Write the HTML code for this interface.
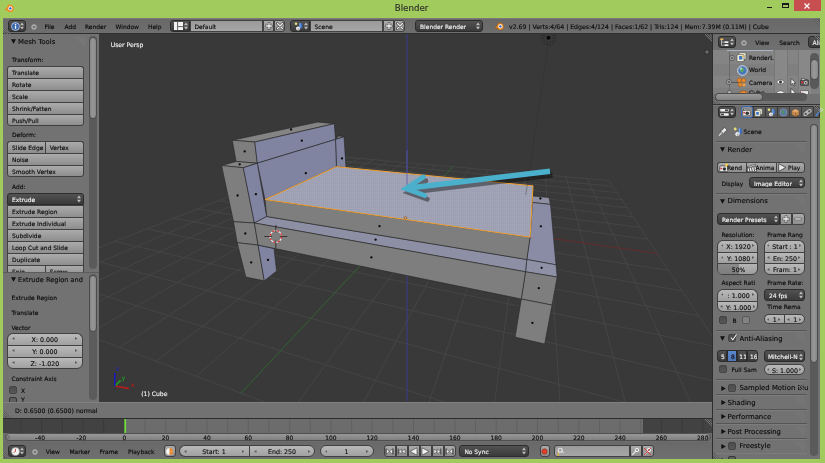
<!DOCTYPE html>
<html><head><meta charset="utf-8"><title>Blender</title><style>
html,body{margin:0;padding:0}
body{width:825px;height:463px;background:#a1cc5d;position:relative;overflow:hidden;font-family:"DejaVu Sans","Liberation Sans",sans-serif;}
#r div,#r svg,#r span.t{position:absolute}
#r{position:absolute;left:0;top:0;width:825px;height:463px;overflow:hidden;filter:blur(0.4px)}
.t{white-space:nowrap;font-family:"DejaVu Sans","Liberation Sans",sans-serif;-webkit-text-stroke:0.13px currentColor}
.b{background:linear-gradient(#ababab,#8e8e8e);border:0.5px solid #414141;box-sizing:border-box;overflow:hidden}
.d{background:linear-gradient(#525252,#3a3a3a);border:0.5px solid #2c2c2c;box-sizing:border-box;overflow:hidden}
.f{background:linear-gradient(#9a9a9a,#a6a6a6);border:0.5px solid #414141;box-sizing:border-box;overflow:hidden}
.n{background:linear-gradient(#b9b9b9,#a0a0a0);border:0.5px solid #414141;box-sizing:border-box;overflow:hidden}
</style></head><body><div id="r">
<div style="left:3px;top:18px;width:817.4px;height:440.5px;background:#727272"></div>
<svg style="left:3.5px;top:2.5px" width="11" height="10" viewBox="3.5 2.5 11 10"><path d="M4.3 8.9L8.6 5.6L7.4 4.4L8.2 3.6L11.5 6.2L9 9.6L5 9.8Z" fill="#ee8a22"/><circle cx="9.8" cy="8" r="3.5" fill="#ee8a22"/><circle cx="9.9" cy="7.9" r="2.1" fill="#fff"/><circle cx="9.9" cy="7.9" r="1.2" fill="#2a5cc0"/></svg>
<div class="t" style="left:0px;top:2.4px;height:12px;line-height:12px;font-size:8.7px;color:#2a2a2a;width:823px;text-align:center;font-family:"Liberation Sans",sans-serif;">Blender</div>
<div style="left:766.5px;top:7px;width:5px;height:1.3px;background:#1a1a1a"></div>
<div style="left:782px;top:3px;width:6.5px;height:5px;border:1px solid #1a1a1a;border-top:2px solid #1a1a1a;box-sizing:border-box"></div>
<div style="left:793.6px;top:0px;width:27px;height:11.4px;background:#c74f50"></div>
<svg style="left:803.5px;top:3px" width="6" height="6" viewBox="0 0 6 6"><path d="M0.5 0.5L5.5 5.5M5.5 0.5L0.5 5.5" stroke="#fff" stroke-width="1.2"/></svg>
<div style="left:3px;top:18px;width:817.4px;height:15.5px;background:linear-gradient(#686868,#6f6f6f);border-top:0.6px solid #7a7a7a;box-sizing:border-box"></div>
<div style="left:3px;top:33px;width:817.4px;height:1px;background:#303030"></div>
<div class="d" style="left:8px;top:20px;width:17.5px;height:11.5px;border-radius:3px;"><span class="t" style="left:3.7px;top:0px;height:11.5px;line-height:11.5px;font-size:5.95px;color:#0a0a0a"></span></div>
<svg style="left:10.5px;top:21.5px" width="9" height="9" viewBox="0 0 9 9"><circle cx="4.5" cy="4.5" r="4" fill="#3a66b0" stroke="#c8d4e8" stroke-width="0.8"/><rect x="3.9" y="3.6" width="1.3" height="3.2" fill="#fff"/><rect x="3.9" y="1.8" width="1.3" height="1.2" fill="#fff"/></svg>
<svg style="left:20.2px;top:21.8px" width="4" height="8" viewBox="0 0 4 8"><path d="M0 3.2L2 0.6L4 3.2Z M0 4.8L2 7.4L4 4.8Z" fill="#bdbdbd"/></svg>
<svg style="left:30.5px;top:23.5px" width="6" height="6" viewBox="0 0 6 6"><circle cx="3" cy="3" r="2.3" fill="#9a9a9a" stroke="#c8c8c8" stroke-width="0.7"/><rect x="1.8" y="2.7" width="2.4" height="0.7" fill="#333"/></svg>
<div class="t" style="left:44.5px;top:22.099999999999998px;height:10px;line-height:10px;font-size:5.95px;color:#0a0a0a;">File</div>
<div class="t" style="left:64.5px;top:22.099999999999998px;height:10px;line-height:10px;font-size:5.95px;color:#0a0a0a;">Add</div>
<div class="t" style="left:85px;top:22.099999999999998px;height:10px;line-height:10px;font-size:5.95px;color:#0a0a0a;">Render</div>
<div class="t" style="left:115.5px;top:22.099999999999998px;height:10px;line-height:10px;font-size:5.95px;color:#0a0a0a;">Window</div>
<div class="t" style="left:148px;top:22.099999999999998px;height:10px;line-height:10px;font-size:5.95px;color:#0a0a0a;">Help</div>
<div class="d" style="left:170px;top:20px;width:20px;height:11.5px;border-radius:3px 0 0 3px;"><span class="t" style="left:3.7px;top:0px;height:11.5px;line-height:11.5px;font-size:5.95px;color:#0a0a0a"></span></div>
<svg style="left:173.5px;top:21.8px" width="9" height="8" viewBox="0 0 9 8"><rect x="0" y="0" width="9" height="8" fill="#f2f2f2"/><path d="M3.6 0V8M3.6 4.6H9" stroke="#555" stroke-width="0.9"/></svg>
<svg style="left:184.3px;top:21.8px" width="4" height="8" viewBox="0 0 4 8"><path d="M0 3.2L2 0.6L4 3.2Z M0 4.8L2 7.4L4 4.8Z" fill="#bdbdbd"/></svg>
<div class="f" style="left:190px;top:20px;width:73px;height:11.5px;border-radius:0;"><span class="t" style="left:3.5px;top:0.3px;height:11.5px;line-height:11.5px;font-size:5.95px;color:#0a0a0a">Default</span></div>
<div class="b" style="left:263px;top:20px;width:11px;height:11.5px;border-radius:0;"><span class="t" style="left:3.7px;top:0px;height:11.5px;line-height:11.5px;font-size:5.95px;color:#0a0a0a"></span></div>
<svg style="left:264.5px;top:21.7px" width="8" height="8" viewBox="0 0 8 8"><path d="M4 0.6V7.4M0.6 4H7.4" stroke="#3a3a3a" stroke-width="2.4"/><path d="M4 1.1V6.9M1.1 4H6.9" stroke="#f4f4f4" stroke-width="1.3"/></svg>
<div class="b" style="left:274px;top:20px;width:11px;height:11.5px;border-radius:0 3px 3px 0;"><span class="t" style="left:3.7px;top:0px;height:11.5px;line-height:11.5px;font-size:5.95px;color:#0a0a0a"></span></div>
<svg style="left:275.5px;top:21.7px" width="8" height="8" viewBox="0 0 8 8"><path d="M1.3 1.3L6.7 6.7M6.7 1.3L1.3 6.7" stroke="#4a4a4a" stroke-width="2.5" stroke-linecap="round"/><path d="M1.5 1.5L6.5 6.5M6.5 1.5L1.5 6.5" stroke="#ececec" stroke-width="1.3" stroke-linecap="round"/></svg>
<div class="d" style="left:290px;top:20px;width:20px;height:11.5px;border-radius:3px 0 0 3px;"><span class="t" style="left:3.7px;top:0px;height:11.5px;line-height:11.5px;font-size:5.95px;color:#0a0a0a"></span></div>
<svg style="left:293.5px;top:21.5px" width="10" height="9" viewBox="0 0 10 9"><circle cx="2" cy="1.8" r="1.3" fill="#e6e07a"/><rect x="5.4" y="1" width="2.8" height="5.4" rx="1.2" fill="#3a6ec0"/><rect x="5.4" y="1" width="1.2" height="5.4" rx="0.6" fill="#7aa6e6"/><circle cx="4" cy="6.6" r="2" fill="#f2f2f2"/><circle cx="4.4" cy="7.1" r="1.2" fill="#b8b8b8"/></svg>
<svg style="left:304.3px;top:21.8px" width="4" height="8" viewBox="0 0 4 8"><path d="M0 3.2L2 0.6L4 3.2Z M0 4.8L2 7.4L4 4.8Z" fill="#bdbdbd"/></svg>
<div class="f" style="left:310px;top:20px;width:73px;height:11.5px;border-radius:0;"><span class="t" style="left:3.5px;top:0.3px;height:11.5px;line-height:11.5px;font-size:5.95px;color:#0a0a0a">Scene</span></div>
<div class="b" style="left:383px;top:20px;width:11px;height:11.5px;border-radius:0;"><span class="t" style="left:3.7px;top:0px;height:11.5px;line-height:11.5px;font-size:5.95px;color:#0a0a0a"></span></div>
<svg style="left:384.5px;top:21.7px" width="8" height="8" viewBox="0 0 8 8"><path d="M4 0.6V7.4M0.6 4H7.4" stroke="#3a3a3a" stroke-width="2.4"/><path d="M4 1.1V6.9M1.1 4H6.9" stroke="#f4f4f4" stroke-width="1.3"/></svg>
<div class="b" style="left:394px;top:20px;width:11px;height:11.5px;border-radius:0 3px 3px 0;"><span class="t" style="left:3.7px;top:0px;height:11.5px;line-height:11.5px;font-size:5.95px;color:#0a0a0a"></span></div>
<svg style="left:395.5px;top:21.7px" width="8" height="8" viewBox="0 0 8 8"><path d="M1.3 1.3L6.7 6.7M6.7 1.3L1.3 6.7" stroke="#4a4a4a" stroke-width="2.5" stroke-linecap="round"/><path d="M1.5 1.5L6.5 6.5M6.5 1.5L1.5 6.5" stroke="#ececec" stroke-width="1.3" stroke-linecap="round"/></svg>
<div class="d" style="left:415px;top:20px;width:68px;height:11.5px;border-radius:3px;"><span class="t" style="left:4px;top:0.3px;height:11.5px;line-height:11.5px;font-size:5.95px;color:#f0f0f0">Blender Render</span></div>
<svg style="left:476.3px;top:21.8px" width="4" height="8" viewBox="0 0 4 8"><path d="M0 3.2L2 0.6L4 3.2Z M0 4.8L2 7.4L4 4.8Z" fill="#bdbdbd"/></svg>
<svg style="left:494px;top:20.8px" width="11" height="10" viewBox="3.5 2.5 11 10"><path d="M4.3 8.9L8.6 5.6L7.4 4.4L8.2 3.6L11.5 6.2L9 9.6L5 9.8Z" fill="#ee8a22" stroke="#5a3a10" stroke-width="0.3"/><circle cx="9.8" cy="8" r="3.5" fill="#ee8a22" stroke="#5a3a10" stroke-width="0.3"/><circle cx="9.9" cy="7.9" r="2.1" fill="#fff"/><circle cx="9.9" cy="7.9" r="1.2" fill="#2a5cc0"/></svg>
<div class="t" style="left:509px;top:22.099999999999998px;height:10px;line-height:10px;font-size:6.2px;color:#0a0a0a;">v2.69 | Verts:4/64 | Edges:4/124 | Faces:1/62 | Tris:124 | Mem:7.39M (0.11M) | Cube</div>
<div style="left:3px;top:34px;width:96px;height:367.5px;background:#727272"></div>
<div style="left:88.5px;top:36px;width:8px;height:233px;background:#5a5a5a;border-radius:4px"></div>
<div style="left:88.5px;top:37px;width:8px;height:82px;background:linear-gradient(90deg,#858585,#979797 45%,#888888);border-radius:4px;border:0.5px solid #4c4c4c;box-sizing:border-box"></div>
<svg style="left:11.4px;top:39.0px" width="5" height="5" viewBox="0 0 5 5"><path d="M0 0.3L5 0.3L2.5 4.8Z" fill="#111"/></svg>
<div class="t" style="left:18px;top:36.9px;height:10px;line-height:10px;font-size:6.9px;color:#0a0a0a;">Mesh Tools</div>
<svg style="left:75px;top:36.5px" width="11" height="10" viewBox="0 0 11 10"><path d="M1 0L10 9M4 0L11 7M7 0L11 4" stroke="#828282" stroke-width="0.7"/></svg>
<div class="t" style="left:12px;top:55.4px;height:10px;line-height:10px;font-size:5.95px;color:#0a0a0a;">Transform:</div>
<div class="b" style="left:7.3px;top:65.5px;width:76.3px;height:12px;border-radius:3px 3px 0 0;;border-bottom-width:0"><span class="t" style="left:3.7px;top:0px;height:12px;line-height:12px;font-size:5.95px;color:#0a0a0a">Translate</span></div>
<div class="b" style="left:7.3px;top:77.5px;width:76.3px;height:12px;border-radius:0;;border-bottom-width:0"><span class="t" style="left:3.7px;top:0px;height:12px;line-height:12px;font-size:5.95px;color:#0a0a0a">Rotate</span></div>
<div class="b" style="left:7.3px;top:89.5px;width:76.3px;height:12px;border-radius:0;;border-bottom-width:0"><span class="t" style="left:3.7px;top:0px;height:12px;line-height:12px;font-size:5.95px;color:#0a0a0a">Scale</span></div>
<div class="b" style="left:7.3px;top:101.5px;width:76.3px;height:12px;border-radius:0;;border-bottom-width:0"><span class="t" style="left:3.7px;top:0px;height:12px;line-height:12px;font-size:5.95px;color:#0a0a0a">Shrink/Fatten</span></div>
<div class="b" style="left:7.3px;top:113.5px;width:76.3px;height:12px;border-radius:0 0 3px 3px;"><span class="t" style="left:3.7px;top:0px;height:12px;line-height:12px;font-size:5.95px;color:#0a0a0a">Push/Pull</span></div>
<div class="t" style="left:12px;top:130.4px;height:10px;line-height:10px;font-size:5.95px;color:#0a0a0a;">Deform:</div>
<div class="b" style="left:7.3px;top:141px;width:37.7px;height:12px;border-radius:3px 0 0 0;;border-bottom-width:0;border-right-width:0"><span class="t" style="left:3.7px;top:0px;height:12px;line-height:12px;font-size:5.95px;color:#0a0a0a">Slide Edge</span></div>
<div class="b" style="left:45px;top:141px;width:38.6px;height:12px;border-radius:0 3px 0 0;;border-bottom-width:0"><span class="t" style="left:3.7px;top:0px;height:12px;line-height:12px;font-size:5.95px;color:#0a0a0a">Vertex</span></div>
<div class="b" style="left:7.3px;top:153px;width:76.3px;height:12px;border-radius:0;;border-bottom-width:0"><span class="t" style="left:3.7px;top:0px;height:12px;line-height:12px;font-size:5.95px;color:#0a0a0a">Noise</span></div>
<div class="b" style="left:7.3px;top:165px;width:76.3px;height:12px;border-radius:0 0 3px 3px;"><span class="t" style="left:3.7px;top:0px;height:12px;line-height:12px;font-size:5.95px;color:#0a0a0a">Smooth Vertex</span></div>
<div class="t" style="left:12px;top:182.4px;height:10px;line-height:10px;font-size:5.95px;color:#0a0a0a;">Add:</div>
<div class="d" style="left:7.3px;top:193px;width:76.3px;height:12px;border-radius:3px 3px 0 0;"><span class="t" style="left:3.7px;top:0px;height:12px;line-height:12px;font-size:5.95px;color:#f4f4f4">Extrude</span></div>
<svg style="left:77px;top:195px" width="4" height="8" viewBox="0 0 4 8"><path d="M0 3.2L2 0.6L4 3.2Z M0 4.8L2 7.4L4 4.8Z" fill="#bdbdbd"/></svg>
<div class="b" style="left:7.3px;top:205px;width:76.3px;height:12px;border-radius:0;;border-bottom-width:0"><span class="t" style="left:3.7px;top:0px;height:12px;line-height:12px;font-size:5.95px;color:#0a0a0a">Extrude Region</span></div>
<div class="b" style="left:7.3px;top:217px;width:76.3px;height:12px;border-radius:0;;border-bottom-width:0"><span class="t" style="left:3.7px;top:0px;height:12px;line-height:12px;font-size:5.95px;color:#0a0a0a">Extrude Individual</span></div>
<div class="b" style="left:7.3px;top:229px;width:76.3px;height:12px;border-radius:0;;border-bottom-width:0"><span class="t" style="left:3.7px;top:0px;height:12px;line-height:12px;font-size:5.95px;color:#0a0a0a">Subdivide</span></div>
<div class="b" style="left:7.3px;top:241px;width:76.3px;height:12px;border-radius:0;;border-bottom-width:0"><span class="t" style="left:3.7px;top:0px;height:12px;line-height:12px;font-size:5.95px;color:#0a0a0a">Loop Cut and Slide</span></div>
<div class="b" style="left:7.3px;top:253px;width:76.3px;height:12px;border-radius:0;;border-bottom-width:0"><span class="t" style="left:3.7px;top:0px;height:12px;line-height:12px;font-size:5.95px;color:#0a0a0a">Duplicate</span></div>
<div class="b" style="left:7.3px;top:265px;width:37.7px;height:12px;border-radius:0;;border-right-width:0"><span class="t" style="left:3.7px;top:0px;height:12px;line-height:12px;font-size:5.95px;color:#0a0a0a">Spin</span></div>
<div class="b" style="left:45px;top:265px;width:38.6px;height:12px;border-radius:0;"><span class="t" style="left:3.7px;top:0px;height:12px;line-height:12px;font-size:5.95px;color:#0a0a0a">Screw</span></div>
<div style="left:3px;top:271.7px;width:96px;height:130px;background:#727272;border-top:0.6px solid #5c5c5c;box-sizing:border-box"></div>
<div style="left:88.5px;top:273.5px;width:8px;height:126.3px;background:#5c5c5c;border-radius:4px"></div>
<div style="left:88.5px;top:274.5px;width:8px;height:57px;background:linear-gradient(90deg,#858585,#979797 45%,#888888);border-radius:4px;border:0.5px solid #4c4c4c;box-sizing:border-box"></div>
<svg style="left:11.2px;top:277.0px" width="5" height="5" viewBox="0 0 5 5"><path d="M0 0.3L5 0.3L2.5 4.8Z" fill="#111"/></svg>
<div class="t" style="left:18px;top:275.2px;height:10px;line-height:10px;font-size:6.6px;color:#0a0a0a;">Extrude Region and</div>
<div class="t" style="left:11.5px;top:292.9px;height:10px;line-height:10px;font-size:5.95px;color:#0a0a0a;">Extrude Region</div>
<div class="t" style="left:11.5px;top:307.9px;height:10px;line-height:10px;font-size:5.95px;color:#0a0a0a;">Translate</div>
<div class="t" style="left:11.5px;top:322.9px;height:10px;line-height:10px;font-size:5.95px;color:#0a0a0a;">Vector</div>
<div class="n" style="left:7px;top:332.8px;width:75.7px;height:12.1px;border-radius:6px 6px 0 0;;border-bottom-width:0"><span class="t" style="left:-1px;top:0px;width:75.7px;text-align:center;height:12.1px;line-height:12.1px;font-size:6.3px;color:#0a0a0a">X: 0.000</span></div>
<svg style="left:12px;top:337.35px" width="2.5" height="3" viewBox="0 0 2.5 3"><path d="M2.5 0L0 1.5L2.5 3Z" fill="#5e5e5e"/></svg>
<svg style="left:75.2px;top:337.35px" width="2.5" height="3" viewBox="0 0 2.5 3"><path d="M0 0L2.5 1.5L0 3Z" fill="#5e5e5e"/></svg>
<div class="n" style="left:7px;top:344.9px;width:75.7px;height:12.1px;border-radius:0;;border-bottom-width:0"><span class="t" style="left:-1px;top:0px;width:75.7px;text-align:center;height:12.1px;line-height:12.1px;font-size:6.3px;color:#0a0a0a">Y: 0.000</span></div>
<svg style="left:12px;top:349.45px" width="2.5" height="3" viewBox="0 0 2.5 3"><path d="M2.5 0L0 1.5L2.5 3Z" fill="#5e5e5e"/></svg>
<svg style="left:75.2px;top:349.45px" width="2.5" height="3" viewBox="0 0 2.5 3"><path d="M0 0L2.5 1.5L0 3Z" fill="#5e5e5e"/></svg>
<div class="n" style="left:7px;top:357px;width:75.7px;height:11.6px;border-radius:0 0 6px 6px;"><span class="t" style="left:-1px;top:0px;width:75.7px;text-align:center;height:11.6px;line-height:11.6px;font-size:6.3px;color:#0a0a0a">Z: -1.020</span></div>
<svg style="left:12px;top:361.3px" width="2.5" height="3" viewBox="0 0 2.5 3"><path d="M2.5 0L0 1.5L2.5 3Z" fill="#5e5e5e"/></svg>
<svg style="left:75.2px;top:361.3px" width="2.5" height="3" viewBox="0 0 2.5 3"><path d="M0 0L2.5 1.5L0 3Z" fill="#5e5e5e"/></svg>
<div class="t" style="left:11.5px;top:374.09999999999997px;height:10px;line-height:10px;font-size:5.95px;color:#0a0a0a;">Constraint Axis</div>
<div style="left:8.7px;top:385.7px;width:8px;height:8px;background:linear-gradient(#4c4c4c,#575757);border-radius:2px;border:0.4px solid #444;box-sizing:border-box"></div>
<div class="t" style="left:21px;top:386.09999999999997px;height:10px;line-height:10px;font-size:5.95px;color:#0a0a0a;">X</div>
<div style="left:3px;top:396px;width:85px;height:5.5px;overflow:hidden"><div class="cb" style="left:5.7px;top:1px;width:8px;height:8px;position:absolute;background:#5e5e5e;border-radius:2px;border:0.6px solid #353535;box-sizing:border-box"></div><span class="t" style="left:18px;top:-1.5px;font-size:6.1px;line-height:10px;color:#0a0a0a">Y</span></div>
<svg style="left:99px;top:34px" width="613" height="368" viewBox="99 34 613 368">
<rect x="99" y="34" width="613" height="368" fill="#393939"/>
<line x1="-20.4" y1="294.6" x2="332.0" y2="156.0" stroke="#474747" stroke-width="0.8"/>
<line x1="-20.4" y1="294.6" x2="919.4" y2="649.0" stroke="#474747" stroke-width="0.8"/>
<line x1="3.2" y1="303.5" x2="345.5" y2="157.2" stroke="#474747" stroke-width="0.8"/>
<line x1="33.4" y1="273.5" x2="837.1" y2="524.7" stroke="#474747" stroke-width="0.8"/>
<line x1="28.6" y1="313.1" x2="359.5" y2="158.4" stroke="#474747" stroke-width="0.8"/>
<line x1="77.7" y1="256.0" x2="784.1" y2="444.6" stroke="#474747" stroke-width="0.8"/>
<line x1="56.3" y1="323.5" x2="373.9" y2="159.7" stroke="#474747" stroke-width="0.8"/>
<line x1="114.9" y1="241.4" x2="747.1" y2="388.7" stroke="#474747" stroke-width="0.8"/>
<line x1="86.6" y1="334.9" x2="388.7" y2="161.0" stroke="#474747" stroke-width="0.8"/>
<line x1="146.6" y1="228.9" x2="719.8" y2="347.5" stroke="#474747" stroke-width="0.8"/>
<line x1="119.6" y1="347.4" x2="404.0" y2="162.4" stroke="#474747" stroke-width="0.8"/>
<line x1="173.8" y1="218.2" x2="698.8" y2="315.8" stroke="#474747" stroke-width="0.8"/>
<line x1="156.0" y1="361.1" x2="419.8" y2="163.8" stroke="#474747" stroke-width="0.8"/>
<line x1="197.5" y1="208.9" x2="682.2" y2="290.8" stroke="#474747" stroke-width="0.8"/>
<line x1="196.2" y1="376.3" x2="436.0" y2="165.2" stroke="#474747" stroke-width="0.8"/>
<line x1="218.3" y1="200.7" x2="668.7" y2="270.4" stroke="#474747" stroke-width="0.8"/>
<line x1="290.8" y1="412.0" x2="470.1" y2="168.2" stroke="#474747" stroke-width="0.8"/>
<line x1="253.2" y1="187.0" x2="648.2" y2="239.4" stroke="#474747" stroke-width="0.8"/>
<line x1="347.0" y1="433.2" x2="488.0" y2="169.8" stroke="#474747" stroke-width="0.8"/>
<line x1="267.9" y1="181.2" x2="640.1" y2="227.3" stroke="#474747" stroke-width="0.8"/>
<line x1="410.7" y1="457.2" x2="506.5" y2="171.5" stroke="#474747" stroke-width="0.8"/>
<line x1="281.2" y1="176.0" x2="633.2" y2="216.8" stroke="#474747" stroke-width="0.8"/>
<line x1="483.4" y1="484.6" x2="525.6" y2="173.2" stroke="#474747" stroke-width="0.8"/>
<line x1="293.3" y1="171.2" x2="627.2" y2="207.7" stroke="#474747" stroke-width="0.8"/>
<line x1="567.3" y1="516.2" x2="545.4" y2="174.9" stroke="#474747" stroke-width="0.8"/>
<line x1="304.2" y1="166.9" x2="621.9" y2="199.7" stroke="#474747" stroke-width="0.8"/>
<line x1="665.1" y1="553.1" x2="565.9" y2="176.7" stroke="#474747" stroke-width="0.8"/>
<line x1="314.3" y1="163.0" x2="617.2" y2="192.6" stroke="#474747" stroke-width="0.8"/>
<line x1="780.7" y1="596.7" x2="587.2" y2="178.6" stroke="#474747" stroke-width="0.8"/>
<line x1="323.5" y1="159.3" x2="613.0" y2="186.3" stroke="#474747" stroke-width="0.8"/>
<line x1="919.4" y1="649.0" x2="609.2" y2="180.6" stroke="#474747" stroke-width="0.8"/>
<line x1="332.0" y1="156.0" x2="609.2" y2="180.6" stroke="#474747" stroke-width="0.8"/>
<line x1="236.8" y1="193.5" x2="657.6" y2="253.5" stroke="#702828" stroke-width="0.8"/>
<line x1="240.9" y1="393.2" x2="452.8" y2="166.7" stroke="#2f6a2f" stroke-width="0.9"/>
<line x1="407" y1="34" x2="407" y2="401.5" stroke="#3b3b8e" stroke-width="1"/>
<line x1="548.2" y1="44" x2="526" y2="194" stroke="#313131" stroke-width="0.6"/>
<circle cx="548.5" cy="37.7" r="5" fill="none" stroke="#1a1a1a" stroke-width="0.8" stroke-dasharray="1.4 1.4"/>
<circle cx="548.5" cy="37.7" r="7.2" fill="none" stroke="#1a1a1a" stroke-width="0.8" stroke-dasharray="1.4 1.6"/>
<circle cx="548.5" cy="37.7" r="2" fill="#050505"/>
<defs><pattern id="st" width="2" height="2" patternUnits="userSpaceOnUse"><rect width="2" height="2" fill="#9d9fb2"/><rect width="1" height="1" fill="#a6a8ba"/></pattern></defs>
<polygon points="232.3,140.2 317.8,122.1 334.3,123.7 254.8,142.0" fill="#848484" stroke="#262626" stroke-width="0.6" stroke-linejoin="round" />
<polygon points="232.3,140.2 254.8,142.0 257.3,163.2 236.1,161.5" fill="#7e7e7e" stroke="#262626" stroke-width="0.6" stroke-linejoin="round" />
<polygon points="254.8,142.0 334.3,123.7 335.5,139.4 257.3,163.2" fill="#8084a1" stroke="#262626" stroke-width="0.6" stroke-linejoin="round" />
<polygon points="335.5,139.4 338.6,135.9 344.0,136.6" fill="#848484" stroke="#262626" stroke-width="0.6" stroke-linejoin="round" />
<polygon points="335.5,139.4 344.0,136.8 346.0,167.6 336.4,166.7" fill="#8084a1" stroke="#262626" stroke-width="0.6" stroke-linejoin="round" />
<polygon points="257.3,163.2 335.5,139.4 336.4,166.7 265.0,199.6" fill="#8084a1" stroke="#262626" stroke-width="0.6" stroke-linejoin="round" />
<polygon points="221.6,165.6 236.1,161.5 257.3,163.2 243.3,167.7" fill="#848484" stroke="#262626" stroke-width="0.6" stroke-linejoin="round" />
<polygon points="221.6,165.6 243.3,167.7 254.4,223.0 233.5,221.7" fill="#7e7e7e" stroke="#262626" stroke-width="0.6" stroke-linejoin="round" />
<polygon points="243.3,167.7 257.3,163.2 266.7,216.5 254.4,223.0" fill="#8084a1" stroke="#262626" stroke-width="0.6" stroke-linejoin="round" />
<polygon points="233.5,221.7 254.4,223.0 258.1,245.1 237.2,242.7" fill="#7e7e7e" stroke="#262626" stroke-width="0.6" stroke-linejoin="round" />
<polygon points="237.2,242.7 258.1,245.1 264.3,280.8 245.8,277.1" fill="#7e7e7e" stroke="#262626" stroke-width="0.6" stroke-linejoin="round" />
<polygon points="258.1,245.1 274.0,248.6 276.6,271.0 264.3,280.8" fill="#8084a1" stroke="#262626" stroke-width="0.6" stroke-linejoin="round" />
<polygon points="532.5,196.0 549.0,197.6 550.5,204.4 532.5,202.5" fill="#8e8fa2" stroke="#262626" stroke-width="0.6" stroke-linejoin="round" />
<polygon points="532.5,202.5 550.5,204.4 556.0,264.8 526.8,259.5 530.1,237.2" fill="#8a8ca6" stroke="#262626" stroke-width="0.6" stroke-linejoin="round" />
<polygon points="526.8,259.5 556.0,264.8 557.2,277.0 525.5,271.8" fill="#8e90a6" stroke="#262626" stroke-width="0.6" stroke-linejoin="round" />
<polygon points="525.5,271.8 557.2,277.0 552.0,305.1 521.3,299.0" fill="#7e7e7e" stroke="#262626" stroke-width="0.6" stroke-linejoin="round" />
<polygon points="521.3,299.0 552.0,305.1 544.7,344.0 515.1,337.1" fill="#7e7e7e" stroke="#262626" stroke-width="0.6" stroke-linejoin="round" />
<polygon points="266.7,216.5 526.8,259.5 525.5,271.8 254.4,223.0" fill="#8d8fa4" stroke="#262626" stroke-width="0.6" stroke-linejoin="round" />
<polygon points="254.4,223.0 525.5,271.8 521.3,299.0 258.1,245.1" fill="#7e7e7e" stroke="#262626" stroke-width="0.6" stroke-linejoin="round" />
<polygon points="265.0,199.6 530.1,237.2 526.8,259.5 266.7,216.5" fill="#7e7e7e" stroke="#262626" stroke-width="0.6" stroke-linejoin="round" />
<polygon points="265.0,199.6 336.4,166.7 533.0,185.8 530.1,237.2" fill="url(#st)" stroke="#f0a030" stroke-width="1.0" stroke-linejoin="round" />
<circle cx="291.1" cy="129.5" r="1.15" fill="#080808"/>
<circle cx="301.8" cy="140.7" r="1.15" fill="#080808"/>
<circle cx="244.7" cy="151.4" r="1.15" fill="#080808"/>
<circle cx="239.7" cy="164.3" r="1.15" fill="#080808"/>
<circle cx="305.8" cy="173.2" r="1.15" fill="#080808"/>
<circle cx="342" cy="158.4" r="1.15" fill="#080808"/>
<circle cx="237.6" cy="195.5" r="1.15" fill="#080808"/>
<circle cx="255.9" cy="194.2" r="1.15" fill="#080808"/>
<circle cx="245.3" cy="233.5" r="1.15" fill="#080808"/>
<circle cx="251.2" cy="262.4" r="1.15" fill="#080808"/>
<circle cx="268" cy="259.9" r="1.15" fill="#080808"/>
<circle cx="379.5" cy="226.2" r="1.15" fill="#080808"/>
<circle cx="375.6" cy="239.7" r="1.15" fill="#080808"/>
<circle cx="371.4" cy="257.4" r="1.15" fill="#080808"/>
<circle cx="540.4" cy="198.5" r="1.15" fill="#080808"/>
<circle cx="540.9" cy="226.3" r="1.15" fill="#080808"/>
<circle cx="541.6" cy="267.8" r="1.15" fill="#080808"/>
<circle cx="538.8" cy="288.2" r="1.15" fill="#080808"/>
<circle cx="532.4" cy="322.9" r="1.15" fill="#080808"/>
<line x1="407" y1="150" x2="407" y2="187" stroke="#5a5aa8" stroke-width="0.8"/>
<circle cx="405.4" cy="217.8" r="1.3" fill="#e8a060" stroke="#5a3a1a" stroke-width="0.5"/>
<line x1="527.2" y1="185" x2="525.7" y2="195" stroke="#666" stroke-width="0.7"/>
<g transform="translate(2.5,3.8)" opacity="0.4" fill="none" stroke="#000"><path d="M550 171.2L407 188.3" stroke-width="5.4"/><path d="M423.4 177.1L405.6 188.6L424.8 195.5" stroke-width="4.8" stroke-linecap="round" stroke-linejoin="miter"/></g>
<g transform="translate(0,0)" opacity="1" fill="none" stroke="#4bb0cb"><path d="M550 171.2L407 188.3" stroke-width="5.4"/><path d="M423.4 177.1L405.6 188.6L424.8 195.5" stroke-width="4.8" stroke-linecap="round" stroke-linejoin="miter"/></g>
<circle cx="275.8" cy="236.5" r="5.8" fill="none" stroke="#f2f2f2" stroke-width="1.2"/>
<circle cx="275.8" cy="236.5" r="5.8" fill="none" stroke="#d02020" stroke-width="1.2" stroke-dasharray="2.3 2.3"/>
<path d="M264.3 236.5H271.8M279.8 236.5H287.3M275.8 225.0V232.5M275.8 240.5V248.0" stroke="#151515" stroke-width="0.7"/>
</svg>
<div class="t" style="left:110.7px;top:39.9px;height:10px;line-height:10px;font-size:6.1px;color:#f2f2f2;">User Persp</div>
<div class="t" style="left:141.2px;top:389.09999999999997px;height:10px;line-height:10px;font-size:6.1px;color:#f2f2f2;">(1) Cube</div>
<svg style="left:108px;top:364px" width="30" height="30" viewBox="108 364 30 30"><path d="M114.8 386L129 388.6" stroke="#b81c1c" stroke-width="1.6"/><path d="M114.8 386L120.6 380.4" stroke="#22a022" stroke-width="1.6"/><path d="M114.8 386.5L114.8 373" stroke="#1a1ab8" stroke-width="1.6"/></svg>
<div class="t" style="left:116px;top:365.4px;height:8px;line-height:8px;font-size:5.8px;color:#2222c0;">z</div>
<div class="t" style="left:121.7px;top:373.7px;height:8px;line-height:8px;font-size:5.8px;color:#22a022;">y</div>
<div class="t" style="left:131px;top:381.29999999999995px;height:8px;line-height:8px;font-size:5.8px;color:#b81c1c;">x</div>
<svg style="left:703.5px;top:48.5px" width="6" height="6" viewBox="0 0 6 6"><circle cx="3" cy="3" r="2.8" fill="#303030"/><path d="M3 1V5M1 3H5" stroke="#8a8a8a" stroke-width="0.8"/></svg>
<div style="left:3px;top:401.5px;width:709px;height:17px;background:#727272;border-top:1px solid #808080;box-sizing:border-box"></div>
<div class="t" style="left:15px;top:406.09999999999997px;height:10px;line-height:10px;font-size:6.2px;color:#0a0a0a;">D: 0.6500 (0.6500) normal</div>
<div style="left:3px;top:418px;width:709px;height:15.5px;background:#424242;border-top:1px solid #2c2c2c;box-sizing:border-box"></div>
<div style="left:125.2px;top:419px;width:517.8px;height:14.5px;background:#6c6c6c"></div>
<svg style="left:3px;top:419px" width="709" height="14.5" viewBox="3 0 709 14.5"><line x1="21.0" y1="0" x2="21.0" y2="14.5" stroke="#363636" stroke-width="0.7"/><line x1="41.7" y1="0" x2="41.7" y2="14.5" stroke="#363636" stroke-width="0.7"/><line x1="62.3" y1="0" x2="62.3" y2="14.5" stroke="#363636" stroke-width="0.7"/><line x1="83.0" y1="0" x2="83.0" y2="14.5" stroke="#363636" stroke-width="0.7"/><line x1="103.6" y1="0" x2="103.6" y2="14.5" stroke="#363636" stroke-width="0.7"/><line x1="124.3" y1="0" x2="124.3" y2="14.5" stroke="#363636" stroke-width="0.7"/><line x1="145.0" y1="0" x2="145.0" y2="14.5" stroke="#5c5c5c" stroke-width="0.7"/><line x1="165.6" y1="0" x2="165.6" y2="14.5" stroke="#5c5c5c" stroke-width="0.7"/><line x1="186.3" y1="0" x2="186.3" y2="14.5" stroke="#5c5c5c" stroke-width="0.7"/><line x1="206.9" y1="0" x2="206.9" y2="14.5" stroke="#5c5c5c" stroke-width="0.7"/><line x1="227.6" y1="0" x2="227.6" y2="14.5" stroke="#5c5c5c" stroke-width="0.7"/><line x1="248.3" y1="0" x2="248.3" y2="14.5" stroke="#5c5c5c" stroke-width="0.7"/><line x1="268.9" y1="0" x2="268.9" y2="14.5" stroke="#5c5c5c" stroke-width="0.7"/><line x1="289.6" y1="0" x2="289.6" y2="14.5" stroke="#5c5c5c" stroke-width="0.7"/><line x1="310.2" y1="0" x2="310.2" y2="14.5" stroke="#5c5c5c" stroke-width="0.7"/><line x1="330.9" y1="0" x2="330.9" y2="14.5" stroke="#5c5c5c" stroke-width="0.7"/><line x1="351.6" y1="0" x2="351.6" y2="14.5" stroke="#5c5c5c" stroke-width="0.7"/><line x1="372.2" y1="0" x2="372.2" y2="14.5" stroke="#5c5c5c" stroke-width="0.7"/><line x1="392.9" y1="0" x2="392.9" y2="14.5" stroke="#5c5c5c" stroke-width="0.7"/><line x1="413.5" y1="0" x2="413.5" y2="14.5" stroke="#5c5c5c" stroke-width="0.7"/><line x1="434.2" y1="0" x2="434.2" y2="14.5" stroke="#5c5c5c" stroke-width="0.7"/><line x1="454.9" y1="0" x2="454.9" y2="14.5" stroke="#5c5c5c" stroke-width="0.7"/><line x1="475.5" y1="0" x2="475.5" y2="14.5" stroke="#5c5c5c" stroke-width="0.7"/><line x1="496.2" y1="0" x2="496.2" y2="14.5" stroke="#5c5c5c" stroke-width="0.7"/><line x1="516.8" y1="0" x2="516.8" y2="14.5" stroke="#5c5c5c" stroke-width="0.7"/><line x1="537.5" y1="0" x2="537.5" y2="14.5" stroke="#5c5c5c" stroke-width="0.7"/><line x1="558.2" y1="0" x2="558.2" y2="14.5" stroke="#5c5c5c" stroke-width="0.7"/><line x1="578.8" y1="0" x2="578.8" y2="14.5" stroke="#5c5c5c" stroke-width="0.7"/><line x1="599.5" y1="0" x2="599.5" y2="14.5" stroke="#5c5c5c" stroke-width="0.7"/><line x1="620.1" y1="0" x2="620.1" y2="14.5" stroke="#5c5c5c" stroke-width="0.7"/><line x1="640.8" y1="0" x2="640.8" y2="14.5" stroke="#5c5c5c" stroke-width="0.7"/><line x1="661.5" y1="0" x2="661.5" y2="14.5" stroke="#363636" stroke-width="0.7"/><line x1="682.1" y1="0" x2="682.1" y2="14.5" stroke="#363636" stroke-width="0.7"/><line x1="702.8" y1="0" x2="702.8" y2="14.5" stroke="#363636" stroke-width="0.7"/><rect x="124.3" y="0" width="1.8" height="14.5" fill="#6fdc3c"/></svg>
<div style="left:3px;top:433px;width:709px;height:9px;background:#6d6d6d"></div>
<div style="left:4.5px;top:433.4px;width:706px;height:7.4px;background:linear-gradient(#989898,#808080);border-radius:3.7px;border:0.5px solid #505050;box-sizing:border-box"></div>
<svg style="left:6px;top:435.3px" width="4" height="4" viewBox="0 0 4 4"><circle cx="2" cy="2" r="1.7" fill="#7c7c7c" stroke="#5a5a5a" stroke-width="0.4"/></svg>
<svg style="left:705.5px;top:435.3px" width="4" height="4" viewBox="0 0 4 4"><circle cx="2" cy="2" r="1.7" fill="#7c7c7c" stroke="#5a5a5a" stroke-width="0.4"/></svg>
<div class="t" style="left:25.16000000000001px;top:433.7px;height:8px;line-height:8px;font-size:5.95px;color:#0a0a0a;width:30px;text-align:center;">-40</div>
<div class="t" style="left:66.48px;top:433.7px;height:8px;line-height:8px;font-size:5.95px;color:#0a0a0a;width:30px;text-align:center;">-20</div>
<div class="t" style="left:109.3px;top:433.7px;height:8px;line-height:8px;font-size:5.95px;color:#0a0a0a;width:30px;text-align:center;">0</div>
<div class="t" style="left:150.62px;top:433.7px;height:8px;line-height:8px;font-size:5.95px;color:#0a0a0a;width:30px;text-align:center;">20</div>
<div class="t" style="left:191.94px;top:433.7px;height:8px;line-height:8px;font-size:5.95px;color:#0a0a0a;width:30px;text-align:center;">40</div>
<div class="t" style="left:233.26px;top:433.7px;height:8px;line-height:8px;font-size:5.95px;color:#0a0a0a;width:30px;text-align:center;">60</div>
<div class="t" style="left:274.58px;top:433.7px;height:8px;line-height:8px;font-size:5.95px;color:#0a0a0a;width:30px;text-align:center;">80</div>
<div class="t" style="left:315.9px;top:433.7px;height:8px;line-height:8px;font-size:5.95px;color:#0a0a0a;width:30px;text-align:center;">100</div>
<div class="t" style="left:357.21999999999997px;top:433.7px;height:8px;line-height:8px;font-size:5.95px;color:#0a0a0a;width:30px;text-align:center;">120</div>
<div class="t" style="left:398.53999999999996px;top:433.7px;height:8px;line-height:8px;font-size:5.95px;color:#0a0a0a;width:30px;text-align:center;">140</div>
<div class="t" style="left:439.85999999999996px;top:433.7px;height:8px;line-height:8px;font-size:5.95px;color:#0a0a0a;width:30px;text-align:center;">160</div>
<div class="t" style="left:481.18px;top:433.7px;height:8px;line-height:8px;font-size:5.95px;color:#0a0a0a;width:30px;text-align:center;">180</div>
<div class="t" style="left:522.5px;top:433.7px;height:8px;line-height:8px;font-size:5.95px;color:#0a0a0a;width:30px;text-align:center;">200</div>
<div class="t" style="left:563.8199999999999px;top:433.7px;height:8px;line-height:8px;font-size:5.95px;color:#0a0a0a;width:30px;text-align:center;">220</div>
<div class="t" style="left:605.14px;top:433.7px;height:8px;line-height:8px;font-size:5.95px;color:#0a0a0a;width:30px;text-align:center;">240</div>
<div class="t" style="left:646.4599999999999px;top:433.7px;height:8px;line-height:8px;font-size:5.95px;color:#0a0a0a;width:30px;text-align:center;">260</div>
<div class="t" style="left:687.7799999999999px;top:433.7px;height:8px;line-height:8px;font-size:5.95px;color:#0a0a0a;width:30px;text-align:center;">280</div>
<div style="left:3px;top:441.5px;width:709px;height:17px;background:linear-gradient(#696969,#6f6f6f)"></div>
<div class="d" style="left:8px;top:445px;width:17.5px;height:12px;border-radius:3px;"><span class="t" style="left:3.7px;top:0px;height:12px;line-height:12px;font-size:5.95px;color:#0a0a0a"></span></div>
<svg style="left:10.5px;top:446.5px" width="9" height="9" viewBox="0 0 9 9"><circle cx="4.5" cy="4.5" r="4" fill="#f4f4f4" stroke="#999" stroke-width="0.6"/><path d="M4.5 4.5L4.5 1.8M4.5 4.5L2.6 5.6" stroke="#c03030" stroke-width="0.8" fill="none"/></svg>
<svg style="left:20.2px;top:447px" width="4" height="8" viewBox="0 0 4 8"><path d="M0 3.2L2 0.6L4 3.2Z M0 4.8L2 7.4L4 4.8Z" fill="#bdbdbd"/></svg>
<svg style="left:31.5px;top:448.5px" width="6" height="6" viewBox="0 0 6 6"><circle cx="3" cy="3" r="2.3" fill="#9a9a9a" stroke="#c8c8c8" stroke-width="0.7"/><rect x="1.8" y="2.7" width="2.4" height="0.7" fill="#333"/></svg>
<div class="t" style="left:45.7px;top:447.0px;height:10px;line-height:10px;font-size:5.95px;color:#0a0a0a;">View</div>
<div class="t" style="left:69.5px;top:447.0px;height:10px;line-height:10px;font-size:5.95px;color:#0a0a0a;">Marker</div>
<div class="t" style="left:99.5px;top:447.0px;height:10px;line-height:10px;font-size:5.95px;color:#0a0a0a;">Frame</div>
<div class="t" style="left:128px;top:447.0px;height:10px;line-height:10px;font-size:5.95px;color:#0a0a0a;">Playback</div>
<div class="b" style="left:164px;top:445px;width:11.5px;height:12px;border-radius:3px;"><span class="t" style="left:3.7px;top:0px;height:12px;line-height:12px;font-size:5.95px;color:#0a0a0a"></span></div>
<svg style="left:165.3px;top:446.5px" width="9" height="9" viewBox="0 0 9 9"><circle cx="4.5" cy="4.5" r="3.8" fill="#f6f6f6" stroke="#888" stroke-width="0.5"/><path d="M4.5 4.5L4.5 0.9A3.6 3.6 0 0 1 8.1 4.5Z" fill="#e8872a"/><path d="M4.5 4.5L8.1 4.5A3.6 3.6 0 0 1 4.5 8.1Z" fill="#e8872a"/></svg>
<div class="n" style="left:179px;top:445.3px;width:70px;height:11.7px;border-radius:6px 0 0 6px;;border-right-width:0"><span class="t" style="left:-1px;top:0px;width:70px;text-align:center;height:11.7px;line-height:11.7px;font-size:6.3px;color:#0a0a0a">Start: 1</span></div>
<svg style="left:184px;top:449.65000000000003px" width="2.5" height="3" viewBox="0 0 2.5 3"><path d="M2.5 0L0 1.5L2.5 3Z" fill="#5e5e5e"/></svg>
<svg style="left:241.5px;top:449.65000000000003px" width="2.5" height="3" viewBox="0 0 2.5 3"><path d="M0 0L2.5 1.5L0 3Z" fill="#5e5e5e"/></svg>
<div class="n" style="left:249px;top:445.3px;width:66px;height:11.7px;border-radius:0 6px 6px 0;"><span class="t" style="left:-1px;top:0px;width:66px;text-align:center;height:11.7px;line-height:11.7px;font-size:6.3px;color:#0a0a0a">End: 250</span></div>
<svg style="left:254px;top:449.65000000000003px" width="2.5" height="3" viewBox="0 0 2.5 3"><path d="M2.5 0L0 1.5L2.5 3Z" fill="#5e5e5e"/></svg>
<svg style="left:307.5px;top:449.65000000000003px" width="2.5" height="3" viewBox="0 0 2.5 3"><path d="M0 0L2.5 1.5L0 3Z" fill="#5e5e5e"/></svg>
<div class="n" style="left:319.5px;top:445.3px;width:54px;height:11.7px;border-radius:6px;"><span class="t" style="left:-1px;top:0px;width:54px;text-align:center;height:11.7px;line-height:11.7px;font-size:6.3px;color:#0a0a0a">1</span></div>
<svg style="left:324.5px;top:449.65000000000003px" width="2.5" height="3" viewBox="0 0 2.5 3"><path d="M2.5 0L0 1.5L2.5 3Z" fill="#5e5e5e"/></svg>
<svg style="left:366.0px;top:449.65000000000003px" width="2.5" height="3" viewBox="0 0 2.5 3"><path d="M0 0L2.5 1.5L0 3Z" fill="#5e5e5e"/></svg>
<div class="b" style="left:383.7px;top:445.3px;width:12px;height:11.7px;border-radius:3px 0 0 3px;"><span class="t" style="left:3.7px;top:0px;height:11.7px;line-height:11.7px;font-size:5.95px;color:#0a0a0a"></span></div>
<svg style="left:385.2px;top:446.7px" width="9" height="9" viewBox="0 0 9 9"><path d="M1 1.5V7.5M8 1.5V7.5" stroke="#333" stroke-width="0.9"/><path d="M4.5 4.5L7.5 2V7ZM4.5 4.5L1.5 2V7Z" fill="#f2f2f2" stroke="#333" stroke-width="0.5"/></svg>
<div class="b" style="left:395.7px;top:445.3px;width:12px;height:11.7px;border-radius:0;"><span class="t" style="left:3.7px;top:0px;height:11.7px;line-height:11.7px;font-size:5.95px;color:#0a0a0a"></span></div>
<svg style="left:397.2px;top:446.7px" width="9" height="9" viewBox="0 0 9 9"><path d="M1.2 1.5V7.5" stroke="#333" stroke-width="0.9"/><path d="M4.8 4.5L8 2V7ZM1.6 4.5L4.8 2V7Z" fill="#f2f2f2" stroke="#333" stroke-width="0.5"/></svg>
<div class="b" style="left:407.7px;top:445.3px;width:12px;height:11.7px;border-radius:0;"><span class="t" style="left:3.7px;top:0px;height:11.7px;line-height:11.7px;font-size:5.95px;color:#0a0a0a"></span></div>
<svg style="left:409.2px;top:446.7px" width="9" height="9" viewBox="0 0 9 9"><path d="M1 4.5L8 0.8V8.2Z" fill="#f2f2f2" stroke="#333" stroke-width="0.6"/></svg>
<div class="b" style="left:419.7px;top:445.3px;width:12px;height:11.7px;border-radius:0;"><span class="t" style="left:3.7px;top:0px;height:11.7px;line-height:11.7px;font-size:5.95px;color:#0a0a0a"></span></div>
<svg style="left:421.2px;top:446.7px" width="9" height="9" viewBox="0 0 9 9"><path d="M8 4.5L1 0.8V8.2Z" fill="#f2f2f2" stroke="#333" stroke-width="0.6"/></svg>
<div class="b" style="left:431.7px;top:445.3px;width:12px;height:11.7px;border-radius:0;"><span class="t" style="left:3.7px;top:0px;height:11.7px;line-height:11.7px;font-size:5.95px;color:#0a0a0a"></span></div>
<svg style="left:433.2px;top:446.7px" width="9" height="9" viewBox="0 0 9 9"><path d="M7.8 1.5V7.5" stroke="#333" stroke-width="0.9"/><path d="M4.2 4.5L1 2V7ZM7.4 4.5L4.2 2V7Z" fill="#f2f2f2" stroke="#333" stroke-width="0.5"/></svg>
<div class="b" style="left:443.7px;top:445.3px;width:12px;height:11.7px;border-radius:0 3px 3px 0;"><span class="t" style="left:3.7px;top:0px;height:11.7px;line-height:11.7px;font-size:5.95px;color:#0a0a0a"></span></div>
<svg style="left:445.2px;top:446.7px" width="9" height="9" viewBox="0 0 9 9"><path d="M1 1.5V7.5M8 1.5V7.5" stroke="#333" stroke-width="0.9"/><path d="M4.5 4.5L1.5 2V7ZM4.5 4.5L7.5 2V7Z" fill="#f2f2f2" stroke="#333" stroke-width="0.5"/></svg>
<div class="d" style="left:459.4px;top:445.3px;width:69.4px;height:11.7px;border-radius:3px;"><span class="t" style="left:4px;top:0px;height:11.7px;line-height:11.7px;font-size:5.95px;color:#f0f0f0">No Sync</span></div>
<svg style="left:522px;top:447.2px" width="4" height="8" viewBox="0 0 4 8"><path d="M0 3.2L2 0.6L4 3.2Z M0 4.8L2 7.4L4 4.8Z" fill="#bdbdbd"/></svg>
<div class="b" style="left:539.5px;top:445.3px;width:10.5px;height:11.7px;border-radius:3px;"><span class="t" style="left:3.7px;top:0px;height:11.7px;line-height:11.7px;font-size:5.95px;color:#0a0a0a"></span></div>
<svg style="left:541.3px;top:447.7px" width="7" height="7" viewBox="0 0 7 7"><circle cx="3.5" cy="3.5" r="2.7" fill="#e0402a" stroke="#7a2a1a" stroke-width="0.5"/></svg>
<div class="f" style="left:554px;top:445.3px;width:76px;height:11.7px;border-radius:3px 0 0 3px;"><span class="t" style="left:3.7px;top:0px;height:11.7px;line-height:11.7px;font-size:5.95px;color:#0a0a0a"></span></div>
<svg style="left:556px;top:446.5px" width="9" height="10" viewBox="0 0 9 10"><path d="M2 9L2.5 5.5" stroke="#d8b040" stroke-width="1.6"/><circle cx="4.2" cy="3.2" r="2" fill="none" stroke="#e8e8e8" stroke-width="1.1"/><path d="M5.8 4.2L8 6" stroke="#e8e8e8" stroke-width="1"/></svg>
<div class="b" style="left:630px;top:445.3px;width:11.5px;height:11.7px;border-radius:0;"><span class="t" style="left:3.7px;top:0px;height:11.7px;line-height:11.7px;font-size:5.95px;color:#0a0a0a"></span></div>
<svg style="left:631.2px;top:446.8px" width="9" height="9" viewBox="0 0 9 9"><circle cx="6" cy="3" r="1.7" fill="none" stroke="#f0f0f0" stroke-width="1"/><path d="M4.8 4.2L1.2 7.8" stroke="#f0f0f0" stroke-width="1.1"/></svg>
<div class="b" style="left:641.5px;top:445.3px;width:12.5px;height:11.7px;border-radius:0 3px 3px 0;"><span class="t" style="left:3.7px;top:0px;height:11.7px;line-height:11.7px;font-size:5.95px;color:#0a0a0a"></span></div>
<svg style="left:643.2px;top:446.8px" width="9" height="9" viewBox="0 0 9 9"><circle cx="6" cy="3" r="1.7" fill="none" stroke="#f0f0f0" stroke-width="1"/><path d="M4.8 4.2L1.2 7.8" stroke="#f0f0f0" stroke-width="1.1"/><path d="M1 1L8 8M8 1L1 8" stroke="#d03030" stroke-width="0.9"/></svg>
<div style="left:712px;top:34px;width:108.4px;height:70px;background:#727272"></div>
<div style="left:712px;top:34px;width:108.4px;height:16px;background:linear-gradient(#6a6a6a,#707070)"></div>
<div class="d" style="left:717.7px;top:36.3px;width:18px;height:11.7px;border-radius:3px;"><span class="t" style="left:3.7px;top:0px;height:11.7px;line-height:11.7px;font-size:5.95px;color:#0a0a0a"></span></div>
<svg style="left:720px;top:37.8px" width="9" height="9" viewBox="0 0 9 9"><rect x="0.3" y="0.5" width="3" height="1.6" fill="#f0c060"/><path d="M1.5 2V7.5M1.5 4.2H4M1.5 7.2H4" stroke="#ddd" stroke-width="0.7" fill="none"/><rect x="4.4" y="3.3" width="4" height="1.7" fill="#f2f2f2"/><rect x="4.4" y="6.3" width="4" height="1.7" fill="#f2f2f2"/></svg>
<svg style="left:730.4px;top:38.2px" width="4" height="8" viewBox="0 0 4 8"><path d="M0 3.2L2 0.6L4 3.2Z M0 4.8L2 7.4L4 4.8Z" fill="#bdbdbd"/></svg>
<svg style="left:741px;top:40px" width="6" height="6" viewBox="0 0 6 6"><circle cx="3" cy="3" r="2.3" fill="#9a9a9a" stroke="#c8c8c8" stroke-width="0.7"/><rect x="1.8" y="2.7" width="2.4" height="0.7" fill="#333"/></svg>
<div class="t" style="left:755.3px;top:37.9px;height:10px;line-height:10px;font-size:5.95px;color:#0a0a0a;">View</div>
<div class="t" style="left:779.3px;top:37.9px;height:10px;line-height:10px;font-size:5.95px;color:#0a0a0a;">Search</div>
<div style="left:807.5px;top:36.3px;width:12.5px;height:11.7px;overflow:hidden"><div class="d" style="left:0;top:0;width:30px;height:11.7px;border-radius:3px"><span class="t" style="left:4px;top:0;line-height:11.7px;font-size:6.1px;color:#f0f0f0">All Scenes</span></div></div>
<div style="left:712px;top:50px;width:108px;height:43.5px;background:#848484;overflow:hidden"><div style="left:0;top:13.7px;width:108px;height:12.3px;background:#7f7f7f"></div><div style="left:0;top:38.3px;width:108px;height:12.3px;background:#7f7f7f"></div><div style="left:61.7px;top:0;width:13.3px;height:50px;background:#888;border-left:0.5px solid #777"></div><div style="left:75px;top:0;width:11.3px;height:50px;border-left:0.5px solid #777"></div><div style="left:86.3px;top:0;width:11.3px;height:50px;background:#888;border-left:0.5px solid #777"></div><div style="left:17px;top:0;width:0.6px;height:50px;background:#6a6a6a"></div><div style="left:14.7px;top:0.2px;width:46.6px;height:0.7px;background:#aab4c4"></div></div>
<svg style="left:729.3px;top:54.7px" width="6" height="6" viewBox="0 0 6 6"><circle cx="3" cy="3" r="2.5" fill="#c8c8c8" stroke="#2a2a2a" stroke-width="0.6"/><path d="M3 1.5V4.5M1.5 3H4.5" stroke="#1a1a1a" stroke-width="0.7"/></svg>
<svg style="left:726.2px;top:79.3px" width="6" height="6" viewBox="0 0 6 6"><circle cx="3" cy="3" r="2.5" fill="#c8c8c8" stroke="#2a2a2a" stroke-width="0.6"/><path d="M3 1.5V4.5M1.5 3H4.5" stroke="#1a1a1a" stroke-width="0.7"/></svg>
<div style="left:731.5px;top:82px;width:6px;height:0.6px;background:#555"></div>
<svg style="left:736.3px;top:52.3px" width="11" height="11" viewBox="0 0 11 11"><rect x="3" y="0.6" width="7" height="7" rx="1" fill="#e8e4d0" stroke="#444" stroke-width="0.6"/><rect x="1" y="2.6" width="7" height="7" rx="1" fill="#f4f0e0" stroke="#444" stroke-width="0.6"/><rect x="3" y="4" width="3.4" height="3.6" fill="#3f78c4"/><circle cx="6.6" cy="4.2" r="1" fill="#f0c040"/></svg>
<div class="t" style="left:749px;top:53.1px;height:10px;line-height:10px;font-size:5.95px;color:#0a0a0a;">RenderL</div>
<svg style="left:736.5px;top:64.6px" width="11" height="11" viewBox="0 0 11 11"><circle cx="5.5" cy="5.5" r="4.8" fill="#4a78b8" stroke="#dde6f2" stroke-width="0.9"/><path d="M3 3.5Q5 2 6.5 3.5Q8 5 6 6.5Q4 8 3.5 6Q2.5 5 3 3.5Z" fill="#5aa860"/><circle cx="4" cy="3.6" r="1.2" fill="#dfe8f5" opacity="0.7"/></svg>
<div class="t" style="left:749px;top:65.4px;height:10px;line-height:10px;font-size:5.95px;color:#0a0a0a;">World</div>
<svg style="left:736.3px;top:76.8px" width="11" height="11" viewBox="0 0 11 11"><circle cx="3.3" cy="3.2" r="2.2" fill="#e8872a" stroke="#7a4a18" stroke-width="0.4"/><circle cx="7.6" cy="3.4" r="2.2" fill="#e8872a" stroke="#7a4a18" stroke-width="0.4"/><circle cx="4.2" cy="7.6" r="2.2" fill="#e8872a" stroke="#7a4a18" stroke-width="0.4"/><circle cx="8" cy="7.8" r="1.6" fill="#f0a040"/></svg>
<div class="t" style="left:749px;top:77.7px;height:10px;line-height:10px;font-size:5.95px;color:#0a0a0a;">Camera</div>
<svg style="left:775.5px;top:79.3px" width="9" height="6" viewBox="0 0 9 6"><path d="M0.4 3Q4.5 -1.4 8.6 3Q4.5 7.4 0.4 3Z" fill="#f4f4f4" stroke="#333" stroke-width="0.5"/><circle cx="4.5" cy="3" r="1.5" fill="#333"/></svg>
<svg style="left:789.5px;top:78.1px" width="7" height="9" viewBox="0 0 7 9"><path d="M1 0.5L1 6.8L2.6 5.4L3.8 8.2L4.9 7.7L3.8 5L5.8 5Z" fill="#f4f4f4" stroke="#222" stroke-width="0.6"/></svg>
<svg style="left:799.5px;top:78.3px" width="9" height="8" viewBox="0 0 9 8"><rect x="0.5" y="1.8" width="8" height="5.8" rx="0.8" fill="#5a5a5a" stroke="#2a2a2a" stroke-width="0.6"/><rect x="1.5" y="0.5" width="3.4" height="1.6" fill="#c8c8c8" stroke="#333" stroke-width="0.4"/><circle cx="5.8" cy="4.8" r="1.7" fill="#e0e0e0"/><circle cx="5.8" cy="4.8" r="0.9" fill="#333"/><circle cx="2.3" cy="4.4" r="1.1" fill="#d83030"/></svg>
<div style="left:712px;top:88px;width:108px;height:5.5px;overflow:hidden"><svg style="left:25.5px;top:0.5px" width="11" height="11" viewBox="0 0 11 11"><path d="M1 3.5L5.5 1.5L10 3.5V8.5L5.5 10.5L1 8.5Z" fill="#e8872a" stroke="#7a4a18" stroke-width="0.5"/></svg><span class="t" style="left:37px;top:-0.5px;font-size:6.1px;line-height:10px;color:#0a0a0a">Cube</span><svg style="left:63.5px;top:1.5px" width="9" height="6" viewBox="0 0 9 6"><path d="M0.4 3Q4.5 -1.4 8.6 3Q4.5 7.4 0.4 3Z" fill="#f4f4f4" stroke="#333" stroke-width="0.5"/></svg><svg style="left:77.5px;top:0.3px" width="7" height="9" viewBox="0 0 7 9"><path d="M1 0.5L1 6.8L2.6 5.4L3.8 8.2L4.9 7.7L3.8 5L5.8 5Z" fill="#f4f4f4" stroke="#222" stroke-width="0.6"/></svg><svg style="left:87.5px;top:0.5px" width="9" height="8" viewBox="0 0 9 8"><rect x="0.5" y="1.6" width="8" height="6" rx="0.8" fill="#e8e8e8" stroke="#333" stroke-width="0.6"/><circle cx="2.2" cy="4.4" r="1" fill="#d03030"/></svg><svg style="left:14.7px;top:2px" width="5" height="5" viewBox="0 0 5 5"><circle cx="2.5" cy="2.5" r="2.1" fill="#b0b0b0" stroke="#333" stroke-width="0.5"/></svg></div>
<div style="left:810px;top:52.7px;width:8.6px;height:36.6px;background:#595959;border-radius:4.3px"></div>
<div style="left:810px;top:59.3px;width:8.6px;height:20.7px;background:linear-gradient(90deg,#858585,#999 45%,#888);border-radius:4.3px;border:0.5px solid #4c4c4c;box-sizing:border-box"></div>
<div style="left:712px;top:93.5px;width:108px;height:10.5px;background:#727272"></div>
<div style="left:715.3px;top:93.3px;width:91.4px;height:7.4px;background:#595959;border-radius:3.7px"></div>
<div style="left:715.3px;top:93.3px;width:48px;height:7.4px;background:linear-gradient(#9a9a9a,#828282);border-radius:3.7px;border:0.5px solid #4c4c4c;box-sizing:border-box"></div>
<div style="left:712px;top:103.8px;width:108.4px;height:354.7px;background:#727272"></div>
<div style="left:712px;top:103.8px;width:108.4px;height:16.5px;background:linear-gradient(#6a6a6a,#707070);border-top:1px solid #333;box-sizing:border-box"></div>
<div style="left:712px;top:104.8px;width:108.4px;height:0.6px;background:#7a7a7a"></div>
<div class="d" style="left:717.7px;top:106.3px;width:18px;height:11.7px;border-radius:3px;"><span class="t" style="left:3.7px;top:0px;height:11.7px;line-height:11.7px;font-size:5.95px;color:#0a0a0a"></span></div>
<svg style="left:720px;top:107.8px" width="9" height="9" viewBox="0 0 9 9"><rect x="0.3" y="1" width="8.4" height="2.6" rx="0.5" fill="#f2f2f2"/><rect x="0.3" y="5.2" width="8.4" height="2.6" rx="0.5" fill="#f2f2f2"/><rect x="5" y="1.4" width="3" height="1.6" fill="#444"/><rect x="1" y="5.7" width="3" height="1.6" fill="#444"/></svg>
<svg style="left:730.4px;top:108.2px" width="4" height="8" viewBox="0 0 4 8"><path d="M0 3.2L2 0.6L4 3.2Z M0 4.8L2 7.4L4 4.8Z" fill="#bdbdbd"/></svg>
<div style="left:740.9px;top:106px;width:79.5px;height:11.9px;background:linear-gradient(#5f5f5f,#535353);border:0.5px solid #303030;border-radius:2.5px 0 0 2.5px;box-sizing:border-box"></div>
<div style="left:740.9px;top:106px;width:11.9px;height:11.9px;background:#8e8e8e;border:0.8px solid #3a68b8;border-radius:2.5px;box-sizing:border-box"></div>
<svg style="left:742.4px;top:107.5px" width="9" height="9" viewBox="0 0 10 10"><rect x="0.8" y="2.6" width="8.4" height="6" rx="1" fill="#f0f0f0" stroke="#222" stroke-width="0.6"/><rect x="2" y="1.2" width="3" height="1.6" fill="#ddd" stroke="#222" stroke-width="0.4"/><circle cx="5.8" cy="5.8" r="2" fill="#333"/><circle cx="2.4" cy="5.2" r="1" fill="#d03030"/></svg>
<div style="left:752.65px;top:107px;width:0.6px;height:10.5px;background:#3a3a3a"></div>
<svg style="left:754.4499999999999px;top:107.5px" width="9" height="9" viewBox="0 0 10 10"><rect x="3.2" y="0.8" width="6" height="6.4" rx="0.8" fill="#e4e0cc" stroke="#444" stroke-width="0.5"/><rect x="1" y="2.8" width="6" height="6.4" rx="0.8" fill="#f4f0e0" stroke="#444" stroke-width="0.5"/><rect x="2.4" y="4.4" width="3" height="3.2" fill="#3f78c4"/></svg>
<div style="left:764.7px;top:107px;width:0.6px;height:10.5px;background:#3a3a3a"></div>
<svg style="left:766.5px;top:107.5px" width="9" height="9" viewBox="0 0 10 10"><circle cx="2.2" cy="2" r="1.4" fill="#e6e07a"/><rect x="5.8" y="1.2" width="3" height="5.8" rx="1.3" fill="#3a6ec0"/><rect x="5.8" y="1.2" width="1.3" height="5.8" rx="0.6" fill="#7aa6e6"/><circle cx="4.4" cy="7.2" r="2.1" fill="#f2f2f2"/><circle cx="4.8" cy="7.7" r="1.2" fill="#b8b8b8"/></svg>
<div style="left:776.75px;top:107px;width:0.6px;height:10.5px;background:#3a3a3a"></div>
<svg style="left:778.55px;top:107.5px" width="9" height="9" viewBox="0 0 10 10"><circle cx="5" cy="5" r="4" fill="#5578a8" stroke="#9aa8bc" stroke-width="0.6"/><path d="M2.8 3.4Q4.6 2 6 3.4Q7.4 4.8 5.6 6.2Q3.8 7.4 3.2 5.6Q2.4 4.6 2.8 3.4Z" fill="#5a9060"/></svg>
<div style="left:788.8000000000001px;top:107px;width:0.6px;height:10.5px;background:#3a3a3a"></div>
<svg style="left:790.6px;top:107.5px" width="9" height="9" viewBox="0 0 10 10"><path d="M1 3.2L5 1.2L9 3.2V7.6L5 9.4L1 7.6Z" fill="#c98a4e" stroke="#6a4a28" stroke-width="0.5"/><path d="M1 3.2L5 5L9 3.2L5 1.2Z" fill="#e0a870"/><path d="M5 5V9.4" stroke="#6a4a28" stroke-width="0.5" fill="none"/></svg>
<div style="left:800.85px;top:107px;width:0.6px;height:10.5px;background:#3a3a3a"></div>
<svg style="left:802.65px;top:107.5px" width="9" height="9" viewBox="0 0 10 10"><ellipse cx="3.4" cy="6.2" rx="2.6" ry="1.7" transform="rotate(-35 3.4 6.2)" fill="none" stroke="#c4c4c4" stroke-width="1.1"/><ellipse cx="6.6" cy="3.8" rx="2.6" ry="1.7" transform="rotate(-35 6.6 3.8)" fill="none" stroke="#c4c4c4" stroke-width="1.1"/></svg>
<div style="left:812.9000000000001px;top:107px;width:0.6px;height:10.5px;background:#3a3a3a"></div>
<svg style="left:814.7px;top:107.5px" width="9" height="9" viewBox="0 0 10 10"><path d="M1 9L6 2.4" stroke="#4a88d8" stroke-width="1.6"/><circle cx="7" cy="2" r="1.6" fill="none" stroke="#ddd" stroke-width="0.9"/></svg>
<div style="left:809.6px;top:123.7px;width:8.6px;height:332px;background:#5a5a5a;border-radius:4.3px"></div>
<div style="left:809.6px;top:123.7px;width:8.6px;height:239px;background:linear-gradient(90deg,#858585,#979797 45%,#888888);border-radius:4.3px;border:0.5px solid #4c4c4c;box-sizing:border-box"></div>
<svg style="left:717.6px;top:125.8px" width="10.5" height="10.5" viewBox="0 0 9 9"><path d="M5.2 0.8L8.2 3.8L6.8 4.2L5.4 5.6L5.2 7.2L1.8 3.8L3.4 3.6L4.8 2.2Z" fill="#e6e6e6" stroke="#333" stroke-width="0.5"/><path d="M3.4 5.6L0.8 8.2" stroke="#e6e6e6" stroke-width="0.9"/></svg>
<svg style="left:732.5px;top:126.8px" width="10" height="10" viewBox="0 0 10 10"><circle cx="2.2" cy="2" r="1.4" fill="#e6e07a"/><rect x="5.8" y="1.2" width="3" height="5.8" rx="1.3" fill="#3a6ec0"/><rect x="5.8" y="1.2" width="1.3" height="5.8" rx="0.6" fill="#7aa6e6"/><circle cx="4.4" cy="7.2" r="2.1" fill="#f2f2f2"/><circle cx="4.8" cy="7.7" r="1.2" fill="#b8b8b8"/></svg>
<div class="t" style="left:743.6px;top:126.9px;height:10px;line-height:10px;font-size:5.95px;color:#0a0a0a;">Scene</div>
<div style="left:715.5px;top:141.2px;width:91px;height:0.9px;background:#555"></div>
<div style="left:715.5px;top:142.1px;width:91px;height:0.6px;background:#7c7c7c"></div>
<svg style="left:720.4px;top:146.9px" width="5" height="5" viewBox="0 0 5 5"><path d="M0 0.3L5 0.3L2.5 4.8Z" fill="#111"/></svg>
<div class="t" style="left:727.6px;top:144.8px;height:10px;line-height:10px;font-size:6.9px;color:#0a0a0a;width:79.89999999999998px;text-align:left;overflow:hidden;">Render</div>
<svg style="left:794px;top:144.4px" width="11" height="10" viewBox="0 0 11 10"><path d="M1 0L10 9M4 0L11 7M7 0L11 4" stroke="#7e7e7e" stroke-width="0.7"/></svg>
<div class="b" style="left:717.3px;top:161.5px;width:28.7px;height:11.6px;border-radius:3px 0 0 3px;;border-right-width:0"><span class="t" style="left:3.7px;top:0px;height:11.6px;line-height:11.6px;font-size:5.95px;color:#0a0a0a"></span></div>
<div class="b" style="left:746px;top:161.5px;width:29.8px;height:11.6px;border-radius:0;;border-right-width:0"><span class="t" style="left:3.7px;top:0px;height:11.6px;line-height:11.6px;font-size:5.95px;color:#0a0a0a"></span></div>
<div class="b" style="left:775.8px;top:161.5px;width:29.2px;height:11.6px;border-radius:0 3px 3px 0;"><span class="t" style="left:3.7px;top:0px;height:11.6px;line-height:11.6px;font-size:5.95px;color:#0a0a0a"></span></div>
<svg style="left:718.5px;top:162.5px" width="10" height="10" viewBox="0 0 10 10"><rect x="0.8" y="3" width="8" height="5.6" rx="0.8" fill="#f0f0f0" stroke="#222" stroke-width="0.6"/><circle cx="5.4" cy="6" r="1.8" fill="#333"/><circle cx="2.2" cy="5.4" r="0.9" fill="#d03030"/><circle cx="7.6" cy="2" r="1.5" fill="#f5d040"/></svg>
<div class="t" style="left:727px;top:162.8px;height:10px;line-height:10px;font-size:5.95px;color:#0a0a0a;">Rend</div>
<svg style="left:747px;top:162.5px" width="10" height="10" viewBox="0 0 10 10"><rect x="0.6" y="4" width="8.8" height="4.8" fill="#e8e8e8" stroke="#222" stroke-width="0.5"/><path d="M0.8 3.6L8.6 1L9 2.4L1.2 5Z" fill="#ddd" stroke="#222" stroke-width="0.5"/><path d="M2 4.4L3 8.6M4.4 4.4L5.4 8.6M6.8 4.4L7.8 8.6" stroke="#333" stroke-width="0.8"/></svg>
<div class="t" style="left:755.5px;top:162.8px;height:10px;line-height:10px;font-size:5.95px;color:#0a0a0a;">Anima</div>
<svg style="left:778px;top:163px" width="8.5" height="9" viewBox="0 0 8.5 9"><path d="M0.7 0.6L7.8 4.5L0.7 8.4Z" fill="#ececec" stroke="#222" stroke-width="0.7"/></svg>
<div class="t" style="left:788px;top:162.8px;height:10px;line-height:10px;font-size:5.95px;color:#0a0a0a;">Play</div>
<div class="t" style="left:721.4px;top:178.6px;height:10px;line-height:10px;font-size:5.95px;color:#0a0a0a;">Display</div>
<div class="d" style="left:749.1px;top:176.9px;width:55.9px;height:11.5px;border-radius:3px;"><span class="t" style="left:3.8px;top:0px;height:11.5px;line-height:11.5px;font-size:5.95px;color:#f2f2f2">Image Editor</span></div>
<svg style="left:799px;top:178.7px" width="4" height="8" viewBox="0 0 4 8"><path d="M0 3.2L2 0.6L4 3.2Z M0 4.8L2 7.4L4 4.8Z" fill="#bdbdbd"/></svg>
<div style="left:715.5px;top:193.2px;width:91px;height:0.9px;background:#555"></div>
<div style="left:715.5px;top:194.1px;width:91px;height:0.6px;background:#7c7c7c"></div>
<svg style="left:720.4px;top:198.5px" width="5" height="5" viewBox="0 0 5 5"><path d="M0 0.3L5 0.3L2.5 4.8Z" fill="#111"/></svg>
<div class="t" style="left:727.6px;top:196.4px;height:10px;line-height:10px;font-size:6.9px;color:#0a0a0a;width:79.89999999999998px;text-align:left;overflow:hidden;">Dimensions</div>
<svg style="left:794px;top:196px" width="11" height="10" viewBox="0 0 11 10"><path d="M1 0L10 9M4 0L11 7M7 0L11 4" stroke="#7e7e7e" stroke-width="0.7"/></svg>
<div class="d" style="left:717px;top:213px;width:62.7px;height:11.6px;border-radius:3px 0 0 3px;"><span class="t" style="left:4px;top:0px;height:11.6px;line-height:11.6px;font-size:5.95px;color:#f2f2f2">Render Presets</span></div>
<svg style="left:773.5px;top:214.8px" width="4" height="8" viewBox="0 0 4 8"><path d="M0 3.2L2 0.6L4 3.2Z M0 4.8L2 7.4L4 4.8Z" fill="#bdbdbd"/></svg>
<div class="b" style="left:779.7px;top:213px;width:12.3px;height:11.6px;border-radius:0;"><span class="t" style="left:3.7px;top:0px;height:11.6px;line-height:11.6px;font-size:5.95px;color:#0a0a0a"></span></div>
<svg style="left:781.8px;top:214.8px" width="8" height="8" viewBox="0 0 8 8"><path d="M4 0.6V7.4M0.6 4H7.4" stroke="#3a3a3a" stroke-width="2.4"/><path d="M4 1.1V6.9M1.1 4H6.9" stroke="#f4f4f4" stroke-width="1.3"/></svg>
<div class="b" style="left:792px;top:213px;width:12.5px;height:11.6px;border-radius:0 3px 3px 0;"><span class="t" style="left:3.7px;top:0px;height:11.6px;line-height:11.6px;font-size:5.95px;color:#0a0a0a"></span></div>
<svg style="left:794.2px;top:214.8px" width="8" height="8" viewBox="0 0 8 8"><path d="M0.6 4H7.4" stroke="#3a3a3a" stroke-width="2.4"/><path d="M1.1 4H6.9" stroke="#f4f4f4" stroke-width="1.3"/></svg>
<div class="t" style="left:721.5px;top:229.9px;height:10px;line-height:10px;font-size:5.95px;color:#0a0a0a;">Resolution:</div>
<div class="t" style="left:767.3px;top:229.9px;height:10px;line-height:10px;font-size:5.95px;color:#0a0a0a;">Frame Rang</div>
<div class="n" style="left:717px;top:240px;width:41.2px;height:11.7px;border-radius:6px 6px 0 0;;border-bottom-width:0"><span class="t" style="left:0px;top:0px;width:41.2px;text-align:center;height:11.7px;line-height:11.7px;font-size:6.3px;color:#0a0a0a">X: 1920</span></div>
<svg style="left:720.6px;top:244.35px" width="2.5" height="3" viewBox="0 0 2.5 3"><path d="M2.5 0L0 1.5L2.5 3Z" fill="#5e5e5e"/></svg>
<svg style="left:752.1px;top:244.35px" width="2.5" height="3" viewBox="0 0 2.5 3"><path d="M0 0L2.5 1.5L0 3Z" fill="#5e5e5e"/></svg>
<div class="n" style="left:717px;top:251.7px;width:41.2px;height:11.7px;border-radius:0;;border-bottom-width:0"><span class="t" style="left:0px;top:0px;width:41.2px;text-align:center;height:11.7px;line-height:11.7px;font-size:6.3px;color:#0a0a0a">Y: 1080</span></div>
<svg style="left:720.9px;top:256.05px" width="2.5" height="3" viewBox="0 0 2.5 3"><path d="M2.5 0L0 1.5L2.5 3Z" fill="#5e5e5e"/></svg>
<svg style="left:751.8000000000001px;top:256.05px" width="2.5" height="3" viewBox="0 0 2.5 3"><path d="M0 0L2.5 1.5L0 3Z" fill="#5e5e5e"/></svg>
<div class="n" style="left:717px;top:263.4px;width:41.2px;height:11.9px;border-radius:0 0 6px 6px;background:linear-gradient(#b4b4b4,#9e9e9e)"><div style="left:0;top:0;width:20.6px;height:11.6px;background:linear-gradient(#8a8a8a,#7a7a7a)"></div><span class="t" style="left:0;top:0;width:41.2px;text-align:center;line-height:11.6px;font-size:6.1px;color:#0a0a0a">50%</span></div>
<div class="n" style="left:763.5px;top:240px;width:41px;height:11.7px;border-radius:6px 6px 0 0;;border-bottom-width:0"><span class="t" style="left:0px;top:0px;width:41px;text-align:center;height:11.7px;line-height:11.7px;font-size:6.3px;color:#0a0a0a">Start : 1</span></div>
<svg style="left:766.9px;top:244.35px" width="2.5" height="3" viewBox="0 0 2.5 3"><path d="M2.5 0L0 1.5L2.5 3Z" fill="#5e5e5e"/></svg>
<svg style="left:798.6px;top:244.35px" width="2.5" height="3" viewBox="0 0 2.5 3"><path d="M0 0L2.5 1.5L0 3Z" fill="#5e5e5e"/></svg>
<div class="n" style="left:763.5px;top:251.7px;width:41px;height:11.7px;border-radius:0;;border-bottom-width:0"><span class="t" style="left:0px;top:0px;width:41px;text-align:center;height:11.7px;line-height:11.7px;font-size:6.3px;color:#0a0a0a">En: 250</span></div>
<svg style="left:767.1px;top:256.05px" width="2.5" height="3" viewBox="0 0 2.5 3"><path d="M2.5 0L0 1.5L2.5 3Z" fill="#5e5e5e"/></svg>
<svg style="left:798.4px;top:256.05px" width="2.5" height="3" viewBox="0 0 2.5 3"><path d="M0 0L2.5 1.5L0 3Z" fill="#5e5e5e"/></svg>
<div class="n" style="left:763.5px;top:263.4px;width:41px;height:11.9px;border-radius:0 0 6px 6px;"><span class="t" style="left:0px;top:0px;width:41px;text-align:center;height:11.9px;line-height:11.9px;font-size:6.3px;color:#0a0a0a">Fram: 1</span></div>
<svg style="left:767.1px;top:267.84999999999997px" width="2.5" height="3" viewBox="0 0 2.5 3"><path d="M2.5 0L0 1.5L2.5 3Z" fill="#5e5e5e"/></svg>
<svg style="left:798.4px;top:267.84999999999997px" width="2.5" height="3" viewBox="0 0 2.5 3"><path d="M0 0L2.5 1.5L0 3Z" fill="#5e5e5e"/></svg>
<div class="t" style="left:721.5px;top:278.4px;height:10px;line-height:10px;font-size:5.95px;color:#0a0a0a;">Aspect Rati</div>
<div class="t" style="left:767.3px;top:278.4px;height:10px;line-height:10px;font-size:5.95px;color:#0a0a0a;">Frame Rate:</div>
<div class="n" style="left:717px;top:289px;width:41.2px;height:11.5px;border-radius:6px 6px 0 0;;border-bottom-width:0"><span class="t" style="left:0px;top:0px;width:41.2px;text-align:center;height:11.5px;line-height:11.5px;font-size:6.3px;color:#0a0a0a">: 1.000</span></div>
<svg style="left:720.6px;top:293.25px" width="2.5" height="3" viewBox="0 0 2.5 3"><path d="M2.5 0L0 1.5L2.5 3Z" fill="#5e5e5e"/></svg>
<svg style="left:752.1px;top:293.25px" width="2.5" height="3" viewBox="0 0 2.5 3"><path d="M0 0L2.5 1.5L0 3Z" fill="#5e5e5e"/></svg>
<div class="n" style="left:717px;top:300.5px;width:41.2px;height:11.5px;border-radius:0 0 6px 6px;"><span class="t" style="left:0px;top:0px;width:41.2px;text-align:center;height:11.5px;line-height:11.5px;font-size:6.3px;color:#0a0a0a">Y: 1.000</span></div>
<svg style="left:720.2px;top:304.75px" width="2.5" height="3" viewBox="0 0 2.5 3"><path d="M2.5 0L0 1.5L2.5 3Z" fill="#5e5e5e"/></svg>
<svg style="left:752.5px;top:304.75px" width="2.5" height="3" viewBox="0 0 2.5 3"><path d="M0 0L2.5 1.5L0 3Z" fill="#5e5e5e"/></svg>
<div class="d" style="left:763.5px;top:289px;width:41px;height:11.5px;border-radius:3px;"><span class="t" style="left:4.5px;top:0px;height:11.5px;line-height:11.5px;font-size:5.95px;color:#f2f2f2">24 fps</span></div>
<svg style="left:798.5px;top:290.8px" width="4" height="8" viewBox="0 0 4 8"><path d="M0 3.2L2 0.6L4 3.2Z M0 4.8L2 7.4L4 4.8Z" fill="#bdbdbd"/></svg>
<div class="t" style="left:767.3px;top:302.09999999999997px;height:10px;line-height:10px;font-size:5.95px;color:#0a0a0a;">Time Rema</div>
<div style="left:719px;top:316px;width:8px;height:8px;background:linear-gradient(#4c4c4c,#575757);border-radius:2px;border:0.4px solid #444;box-sizing:border-box"></div>
<div class="t" style="left:732.5px;top:315.9px;height:10px;line-height:10px;font-size:5.95px;color:#0a0a0a;">B</div>
<div style="left:741.5px;top:316px;width:8px;height:8px;background:linear-gradient(#7e7e7e,#868686);border-radius:2px;border:0.6px solid #5a5a5a;box-sizing:border-box"></div>
<div class="n" style="left:763.5px;top:313.6px;width:20.5px;height:10.8px;border-radius:5px 0 0 5px;;border-right-width:0"><span class="t" style="left:0px;top:0px;width:20.5px;text-align:center;height:10.8px;line-height:10.8px;font-size:6.3px;color:#0a0a0a">1</span></div>
<svg style="left:766.7px;top:317.5px" width="2.5" height="3" viewBox="0 0 2.5 3"><path d="M2.5 0L0 1.5L2.5 3Z" fill="#5e5e5e"/></svg>
<svg style="left:778.3px;top:317.5px" width="2.5" height="3" viewBox="0 0 2.5 3"><path d="M0 0L2.5 1.5L0 3Z" fill="#5e5e5e"/></svg>
<div class="n" style="left:784px;top:313.6px;width:20.5px;height:10.8px;border-radius:0 5px 5px 0;"><span class="t" style="left:0px;top:0px;width:20.5px;text-align:center;height:10.8px;line-height:10.8px;font-size:6.3px;color:#0a0a0a">1</span></div>
<svg style="left:787.2px;top:317.5px" width="2.5" height="3" viewBox="0 0 2.5 3"><path d="M2.5 0L0 1.5L2.5 3Z" fill="#5e5e5e"/></svg>
<svg style="left:798.8px;top:317.5px" width="2.5" height="3" viewBox="0 0 2.5 3"><path d="M0 0L2.5 1.5L0 3Z" fill="#5e5e5e"/></svg>
<div style="left:715.5px;top:330.3px;width:91px;height:0.9px;background:#555"></div>
<div style="left:715.5px;top:331.2px;width:91px;height:0.6px;background:#7c7c7c"></div>
<svg style="left:720.4px;top:335.7px" width="5" height="5" viewBox="0 0 5 5"><path d="M0 0.3L5 0.3L2.5 4.8Z" fill="#111"/></svg>
<div style="left:728px;top:334.0px;width:8px;height:8px;background:linear-gradient(#4c4c4c,#575757);border-radius:2px;border:0.4px solid #444;box-sizing:border-box"></div>
<svg style="left:728.5px;top:332.5px" width="9" height="9" viewBox="0 0 9 9"><path d="M2 4.6L3.8 6.9L7.6 1.4" stroke="#2a2a2a" stroke-width="2" fill="none"/><path d="M2 4.6L3.8 6.9L7.6 1.4" stroke="#ececec" stroke-width="1.1" fill="none"/></svg>
<div class="t" style="left:739.5px;top:333.59999999999997px;height:10px;line-height:10px;font-size:6.9px;color:#0a0a0a;width:68.0px;text-align:left;overflow:hidden;">Anti-Aliasing</div>
<svg style="left:794px;top:333.2px" width="11" height="10" viewBox="0 0 11 10"><path d="M1 0L10 9M4 0L11 7M7 0L11 4" stroke="#7e7e7e" stroke-width="0.7"/></svg>
<div class="d" style="left:717px;top:350.4px;width:10px;height:11.5px;border-radius:3px 0 0 3px;"><span class="t" style="left:0px;top:0px;width:10px;text-align:center;height:11.5px;line-height:11.5px;font-size:5.95px;color:#f2f2f2">5</span></div>
<div class="d" style="left:727px;top:350.4px;width:10px;height:11.5px;border-radius:0;background:linear-gradient(#5b86cc,#5078b8)"><span class="t" style="left:0px;top:0px;width:10px;text-align:center;height:11.5px;line-height:11.5px;font-size:5.95px;color:#0a0a0a">8</span></div>
<div class="d" style="left:737px;top:350.4px;width:10.299999999999955px;height:11.5px;border-radius:0;"><span class="t" style="left:0px;top:0px;width:10.299999999999955px;text-align:center;height:11.5px;line-height:11.5px;font-size:5.95px;color:#f2f2f2">11</span></div>
<div class="d" style="left:747.3px;top:350.4px;width:10.900000000000091px;height:11.5px;border-radius:0 3px 3px 0;"><span class="t" style="left:0px;top:0px;width:10.900000000000091px;text-align:center;height:11.5px;line-height:11.5px;font-size:5.95px;color:#f2f2f2">16</span></div>
<div class="d" style="left:763.5px;top:350.4px;width:41px;height:11.5px;border-radius:3px;"><span class="t" style="left:3.5px;top:0px;height:11.5px;line-height:11.5px;font-size:5.95px;color:#f2f2f2">Mitchell-N</span></div>
<svg style="left:799px;top:352.7px" width="4" height="8" viewBox="0 0 4 8"><path d="M0 3.2L2 0.6L4 3.2Z M0 4.8L2 7.4L4 4.8Z" fill="#bdbdbd"/></svg>
<div style="left:719px;top:365px;width:8px;height:8px;background:linear-gradient(#4c4c4c,#575757);border-radius:2px;border:0.4px solid #444;box-sizing:border-box"></div>
<div class="t" style="left:731.5px;top:364.7px;height:10px;line-height:10px;font-size:5.95px;color:#0a0a0a;">Full Sam</div>
<div class="n" style="left:763.5px;top:364px;width:41px;height:11.3px;border-radius:6px;"><span class="t" style="left:0px;top:0px;width:41px;text-align:center;height:11.3px;line-height:11.3px;font-size:6.3px;color:#0a0a0a">S: 1.000</span></div>
<svg style="left:766.9px;top:368.15px" width="2.5" height="3" viewBox="0 0 2.5 3"><path d="M2.5 0L0 1.5L2.5 3Z" fill="#5e5e5e"/></svg>
<svg style="left:798.6px;top:368.15px" width="2.5" height="3" viewBox="0 0 2.5 3"><path d="M0 0L2.5 1.5L0 3Z" fill="#5e5e5e"/></svg>
<div style="left:715.5px;top:379.3px;width:91px;height:0.9px;background:#555"></div>
<div style="left:715.5px;top:380.2px;width:91px;height:0.6px;background:#7c7c7c"></div>
<svg style="left:721px;top:385.5px" width="5" height="5" viewBox="0 0 5 5"><path d="M0.3 0L4.8 2.5L0.3 5Z" fill="#111"/></svg>
<div style="left:728px;top:383.8px;width:8px;height:8px;background:linear-gradient(#4c4c4c,#575757);border-radius:2px;border:0.4px solid #444;box-sizing:border-box"></div>
<div class="t" style="left:739.5px;top:383.4px;height:10px;line-height:10px;font-size:6.9px;color:#0a0a0a;width:68.0px;text-align:left;overflow:hidden;">Sampled Motion Blur</div>
<svg style="left:794px;top:383px" width="11" height="10" viewBox="0 0 11 10"><path d="M1 0L10 9M4 0L11 7M7 0L11 4" stroke="#7e7e7e" stroke-width="0.7"/></svg>
<div style="left:715.5px;top:394.3px;width:91px;height:0.9px;background:#555"></div>
<div style="left:715.5px;top:395.2px;width:91px;height:0.6px;background:#7c7c7c"></div>
<svg style="left:721px;top:399.8px" width="5" height="5" viewBox="0 0 5 5"><path d="M0.3 0L4.8 2.5L0.3 5Z" fill="#111"/></svg>
<div class="t" style="left:727.6px;top:397.7px;height:10px;line-height:10px;font-size:6.9px;color:#0a0a0a;width:79.89999999999998px;text-align:left;overflow:hidden;">Shading</div>
<svg style="left:794px;top:397.3px" width="11" height="10" viewBox="0 0 11 10"><path d="M1 0L10 9M4 0L11 7M7 0L11 4" stroke="#7e7e7e" stroke-width="0.7"/></svg>
<div style="left:715.5px;top:408.7px;width:91px;height:0.9px;background:#555"></div>
<div style="left:715.5px;top:409.59999999999997px;width:91px;height:0.6px;background:#7c7c7c"></div>
<svg style="left:721px;top:414.3px" width="5" height="5" viewBox="0 0 5 5"><path d="M0.3 0L4.8 2.5L0.3 5Z" fill="#111"/></svg>
<div class="t" style="left:727.6px;top:412.2px;height:10px;line-height:10px;font-size:6.9px;color:#0a0a0a;width:79.89999999999998px;text-align:left;overflow:hidden;">Performance</div>
<svg style="left:794px;top:411.8px" width="11" height="10" viewBox="0 0 11 10"><path d="M1 0L10 9M4 0L11 7M7 0L11 4" stroke="#7e7e7e" stroke-width="0.7"/></svg>
<div style="left:715.5px;top:423.3px;width:91px;height:0.9px;background:#555"></div>
<div style="left:715.5px;top:424.2px;width:91px;height:0.6px;background:#7c7c7c"></div>
<svg style="left:721px;top:428.8px" width="5" height="5" viewBox="0 0 5 5"><path d="M0.3 0L4.8 2.5L0.3 5Z" fill="#111"/></svg>
<div class="t" style="left:727.6px;top:426.7px;height:10px;line-height:10px;font-size:6.9px;color:#0a0a0a;width:79.89999999999998px;text-align:left;overflow:hidden;">Post Processing</div>
<svg style="left:794px;top:426.3px" width="11" height="10" viewBox="0 0 11 10"><path d="M1 0L10 9M4 0L11 7M7 0L11 4" stroke="#7e7e7e" stroke-width="0.7"/></svg>
<div style="left:715.5px;top:437.8px;width:91px;height:0.9px;background:#555"></div>
<div style="left:715.5px;top:438.7px;width:91px;height:0.6px;background:#7c7c7c"></div>
<svg style="left:721px;top:443.5px" width="5" height="5" viewBox="0 0 5 5"><path d="M0.3 0L4.8 2.5L0.3 5Z" fill="#111"/></svg>
<div style="left:728px;top:441.8px;width:8px;height:8px;background:linear-gradient(#4c4c4c,#575757);border-radius:2px;border:0.4px solid #444;box-sizing:border-box"></div>
<div class="t" style="left:739.5px;top:441.4px;height:10px;line-height:10px;font-size:6.9px;color:#0a0a0a;width:68.0px;text-align:left;overflow:hidden;">Freestyle</div>
<svg style="left:794px;top:441px" width="11" height="10" viewBox="0 0 11 10"><path d="M1 0L10 9M4 0L11 7M7 0L11 4" stroke="#7e7e7e" stroke-width="0.7"/></svg>
<div style="left:715.5px;top:452.5px;width:91px;height:0.9px;background:#555"></div>
<div style="left:715.5px;top:453.4px;width:91px;height:0.6px;background:#7c7c7c"></div>
<div style="left:712px;top:453.5px;width:97px;height:5px;overflow:hidden"><div style="left:16px;top:2.5px;width:8px;height:8px;background:#5e5e5e;border-radius:2px;border:0.6px solid #353535;box-sizing:border-box"></div><svg style="left:9px;top:4px" width="5" height="5" viewBox="0 0 5 5"><path d="M0.3 0L4.8 2.5L0.3 5Z" fill="#111"/></svg></div>
<svg style="left:812.4px;top:18px" width="8" height="8" viewBox="0 0 8 8"><path d="M0.8 0L8 7.2M3.2 0L8 4.8M5.6 0L8 2.4" stroke="#333" stroke-width="1.1" transform="translate(0.6,0.6)" fill="none"/><path d="M0.8 0L8 7.2M3.2 0L8 4.8M5.6 0L8 2.4" stroke="#909090" stroke-width="0.9" fill="none"/></svg>
<svg style="left:3px;top:25.5px" width="8" height="8" viewBox="0 0 8 8"><path d="M0 0.8L7.2 8M0 3.2L4.8 8M0 5.6L2.4 8" stroke="#333" stroke-width="1.1" transform="translate(0.6,0.6)" fill="none"/><path d="M0 0.8L7.2 8M0 3.2L4.8 8M0 5.6L2.4 8" stroke="#909090" stroke-width="0.9" fill="none"/></svg>
<svg style="left:704px;top:34px" width="8" height="8" viewBox="0 0 8 8"><path d="M0.8 0L8 7.2M3.2 0L8 4.8M5.6 0L8 2.4" stroke="#333" stroke-width="1.1" transform="translate(0.6,0.6)" fill="none"/><path d="M0.8 0L8 7.2M3.2 0L8 4.8M5.6 0L8 2.4" stroke="#909090" stroke-width="0.9" fill="none"/></svg>
<svg style="left:3px;top:410px" width="8" height="8" viewBox="0 0 8 8"><path d="M0 0.8L7.2 8M0 3.2L4.8 8M0 5.6L2.4 8" stroke="#333" stroke-width="1.1" transform="translate(0.6,0.6)" fill="none"/><path d="M0 0.8L7.2 8M0 3.2L4.8 8M0 5.6L2.4 8" stroke="#909090" stroke-width="0.9" fill="none"/></svg>
<svg style="left:704px;top:419px" width="8" height="8" viewBox="0 0 8 8"><path d="M0.8 0L8 7.2M3.2 0L8 4.8M5.6 0L8 2.4" stroke="#333" stroke-width="1.1" transform="translate(0.6,0.6)" fill="none"/><path d="M0.8 0L8 7.2M3.2 0L8 4.8M5.6 0L8 2.4" stroke="#909090" stroke-width="0.9" fill="none"/></svg>
<svg style="left:3px;top:450.5px" width="8" height="8" viewBox="0 0 8 8"><path d="M0 0.8L7.2 8M0 3.2L4.8 8M0 5.6L2.4 8" stroke="#333" stroke-width="1.1" transform="translate(0.6,0.6)" fill="none"/><path d="M0 0.8L7.2 8M0 3.2L4.8 8M0 5.6L2.4 8" stroke="#909090" stroke-width="0.9" fill="none"/></svg>
<svg style="left:812.4px;top:34px" width="8" height="8" viewBox="0 0 8 8"><path d="M0.8 0L8 7.2M3.2 0L8 4.8M5.6 0L8 2.4" stroke="#333" stroke-width="1.1" transform="translate(0.6,0.6)" fill="none"/><path d="M0.8 0L8 7.2M3.2 0L8 4.8M5.6 0L8 2.4" stroke="#909090" stroke-width="0.9" fill="none"/></svg>
<svg style="left:712px;top:96px" width="8" height="8" viewBox="0 0 8 8"><path d="M0 0.8L7.2 8M0 3.2L4.8 8M0 5.6L2.4 8" stroke="#333" stroke-width="1.1" transform="translate(0.6,0.6)" fill="none"/><path d="M0 0.8L7.2 8M0 3.2L4.8 8M0 5.6L2.4 8" stroke="#909090" stroke-width="0.9" fill="none"/></svg>
<svg style="left:812.4px;top:104.8px" width="8" height="8" viewBox="0 0 8 8"><path d="M0.8 0L8 7.2M3.2 0L8 4.8M5.6 0L8 2.4" stroke="#333" stroke-width="1.1" transform="translate(0.6,0.6)" fill="none"/><path d="M0.8 0L8 7.2M3.2 0L8 4.8M5.6 0L8 2.4" stroke="#909090" stroke-width="0.9" fill="none"/></svg>
<svg style="left:712px;top:450.5px" width="8" height="8" viewBox="0 0 8 8"><path d="M0 0.8L7.2 8M0 3.2L4.8 8M0 5.6L2.4 8" stroke="#333" stroke-width="1.1" transform="translate(0.6,0.6)" fill="none"/><path d="M0 0.8L7.2 8M0 3.2L4.8 8M0 5.6L2.4 8" stroke="#909090" stroke-width="0.9" fill="none"/></svg>
<div style="left:711.5px;top:34px;width:0.8px;height:424.5px;background:#2e2e2e"></div>
</div></body></html>
